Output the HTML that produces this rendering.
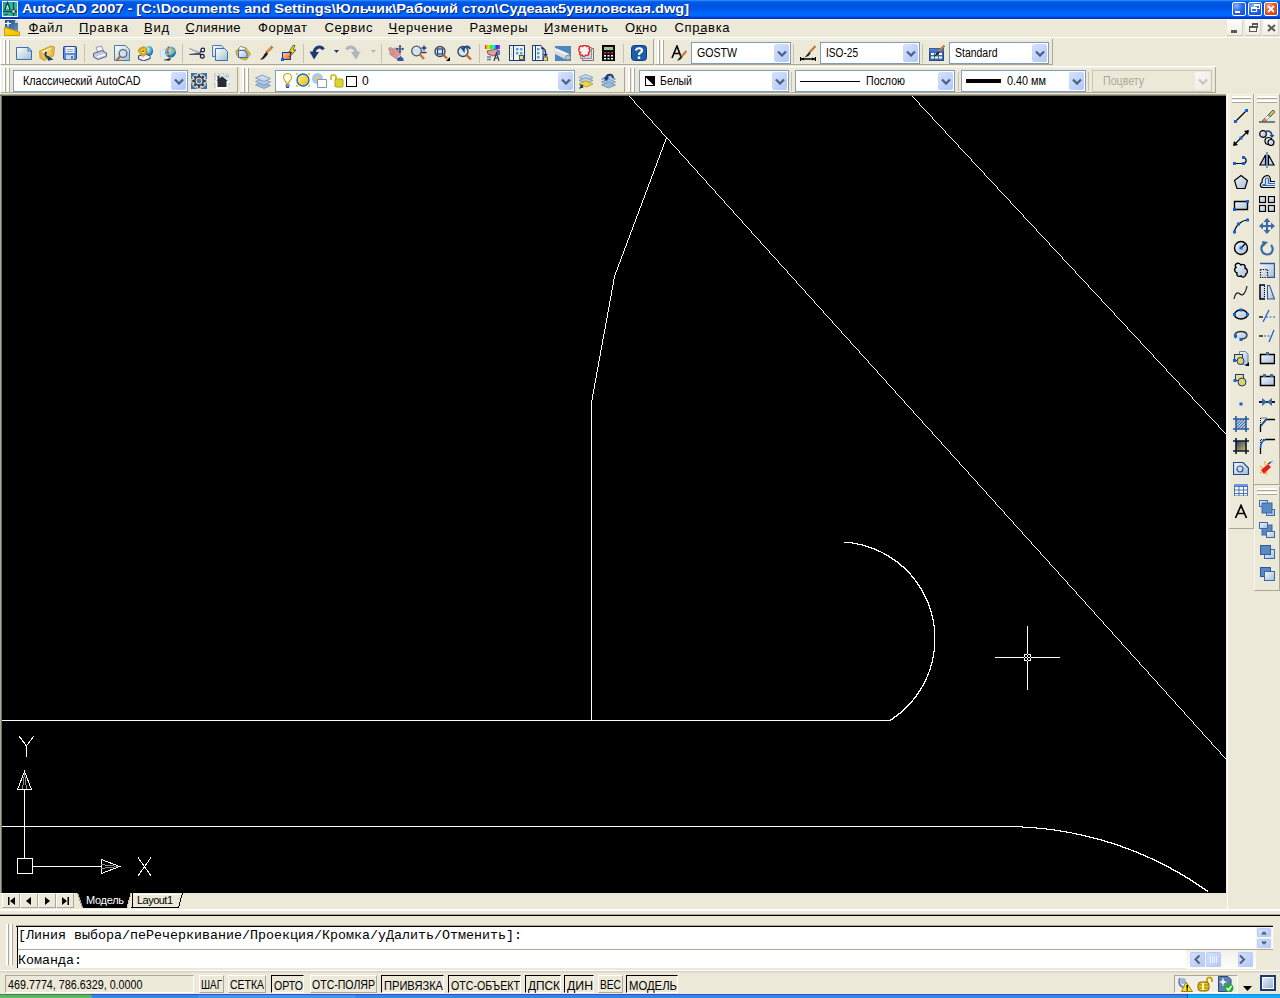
<!DOCTYPE html>
<html><head><meta charset="utf-8"><style>
html,body{margin:0;padding:0}
body{width:1280px;height:998px;overflow:hidden;position:relative;background:#ECE9D8;font-family:"Liberation Sans",sans-serif}
.a{position:absolute}
.t{position:absolute;white-space:pre}
</style></head><body>
<div class="a" style="left:0px;top:0px;width:1280px;height:19px;background:linear-gradient(180deg,#4A9AF8 0px,#0A72F8 1px,#005CE8 2px,#0054E3 4px,#0054E3 8px,#005AF0 10px,#0066FC 12px,#0068FF 16px,#0048E0 17px,#0030D0 18px,#0030D0 19px)"></div>
<svg class="a" style="left:2px;top:1px" width="16" height="16" viewBox="0 0 16 16"><defs><linearGradient id="gTeal" x1="0" y1="0" x2="1" y2="1"><stop offset="0" stop-color="#1E9C88"/><stop offset="0.5" stop-color="#3CB8A4"/><stop offset="1" stop-color="#24A08C"/></linearGradient></defs><rect x="0.5" y="0.5" width="15" height="15" fill="url(#gTeal)" stroke="#FFFFFF"/><path d="M3 9L5.5 2.5L8 9" stroke="#0C4C40" stroke-width="2" fill="none"/><path d="M4.5 8L5.5 4.5L6.5 8" stroke="#E0F8F0" stroke-width="1" fill="none"/><path d="M11.5 1V15M1 10.5H15" stroke="#0C4C40" stroke-width="1.3"/><rect x="10" y="9" width="3" height="3" fill="#FFFFFF" stroke="#0C4C40" stroke-width="0.8"/><path d="M2 14L6 13" stroke="#0C4C40" stroke-width="1"/></svg>
<div class="t" style="left:22px;top:2px;font-size:13px;line-height:13px;color:#fff;font-weight:bold;transform:scaleX(1.1226);transform-origin:0 0;text-shadow:1px 1px 0 #0A246A;">AutoCAD 2007 - [C:\Documents and Settings\Юльчик\Рабочий стол\Судеаак5увиловская.dwg]</div>
<div class="a" style="left:1232px;top:2px;width:12px;height:12px;border:1px solid #fff;border-radius:2px;background:radial-gradient(circle at 30% 25%,#8CB4FF 0,#2A68F0 45%,#0C4AD8 100%)"></div><div class="a" style="left:1235px;top:11px;width:5px;height:2px;background:#fff"></div>
<div class="a" style="left:1248px;top:2px;width:12px;height:12px;border:1px solid #fff;border-radius:2px;background:radial-gradient(circle at 30% 25%,#8CB4FF 0,#2A68F0 45%,#0C4AD8 100%)"></div><div class="a" style="left:1254px;top:4px;width:5px;height:4px;border:1px solid #fff;border-top-width:2px;box-sizing:border-box;width:6px;height:5px"></div><div class="a" style="left:1251px;top:7px;width:6px;height:5px;border:1px solid #fff;border-top-width:2px;box-sizing:border-box;background:#2A68F0"></div>
<div class="a" style="left:1264px;top:2px;width:12px;height:12px;border:1px solid #fff;border-radius:2px;background:radial-gradient(circle at 30% 25%,#F0A080 0,#E05A30 45%,#C83C10 100%)"></div><svg class="a" style="left:1267px;top:5px" width="8" height="8"><path d="M1 1L7 7M7 1L1 7" stroke="#fff" stroke-width="1.8"/></svg>
<div class="a" style="left:0px;top:19px;width:1280px;height:1px;background:#FBF6E4"></div>
<div class="a" style="left:0px;top:37px;width:1280px;height:1px;background:#FFFFFF"></div>
<svg class="a" style="left:4px;top:20px" width="16" height="16" viewBox="0 0 16 16"><defs><linearGradient id="gMB" x1="0" y1="0" x2="1" y2="1"><stop offset="0" stop-color="#1C4A88"/><stop offset="1" stop-color="#6A94C0"/></linearGradient><linearGradient id="gMY" x1="0" y1="0" x2="1" y2="1"><stop offset="0" stop-color="#F8D820"/><stop offset="1" stop-color="#F0C000"/></linearGradient></defs><path d="M1 0H11L14 3V12L1 7Z" fill="url(#gMB)"/><path d="M11 0V3H14Z" fill="#C0D4E8"/><path d="M4 1V7M1 3.5H7" stroke="#FFFFFF" stroke-width="1"/><circle cx="4" cy="3.5" r="1.2" fill="#FFFFFF"/><path d="M0.5 7.5L15.5 12V15.5H0.5Z" fill="url(#gMY)" stroke="#D09800" stroke-width="1"/></svg>
<div class="t" style="left:28.5px;top:21px;font-size:13px;line-height:13px;color:#000;letter-spacing:0.680px;">Файл</div>
<div class="t" style="left:79px;top:21px;font-size:13px;line-height:13px;color:#000;letter-spacing:1.018px;">Правка</div>
<div class="t" style="left:144px;top:21px;font-size:13px;line-height:13px;color:#000;letter-spacing:0.741px;">Вид</div>
<div class="t" style="left:185.5px;top:21px;font-size:13px;line-height:13px;color:#000;letter-spacing:0.343px;">Слияние</div>
<div class="t" style="left:258px;top:21px;font-size:13px;line-height:13px;color:#000;letter-spacing:0.565px;">Формат</div>
<div class="t" style="left:324.5px;top:21px;font-size:13px;line-height:13px;color:#000;letter-spacing:0.697px;">Сервис</div>
<div class="t" style="left:388.5px;top:21px;font-size:13px;line-height:13px;color:#000;letter-spacing:0.785px;">Черчение</div>
<div class="t" style="left:469.5px;top:21px;font-size:13px;line-height:13px;color:#000;letter-spacing:0.663px;">Размеры</div>
<div class="t" style="left:544px;top:21px;font-size:13px;line-height:13px;color:#000;letter-spacing:0.766px;">Изменить</div>
<div class="t" style="left:625px;top:21px;font-size:13px;line-height:13px;color:#000;letter-spacing:0.598px;">Окно</div>
<div class="t" style="left:674.5px;top:21px;font-size:13px;line-height:13px;color:#000;letter-spacing:0.667px;">Справка</div>
<div class="a" style="left:28px;top:33px;width:11px;height:1px;background:#000"></div>
<div class="a" style="left:79px;top:33px;width:10px;height:1px;background:#000"></div>
<div class="a" style="left:144px;top:33px;width:8px;height:1px;background:#000"></div>
<div class="a" style="left:185px;top:33px;width:9px;height:1px;background:#000"></div>
<div class="a" style="left:284px;top:33px;width:9px;height:1px;background:#000"></div>
<div class="a" style="left:341px;top:33px;width:7px;height:1px;background:#000"></div>
<div class="a" style="left:388px;top:33px;width:10px;height:1px;background:#000"></div>
<div class="a" style="left:484px;top:33px;width:7px;height:1px;background:#000"></div>
<div class="a" style="left:544px;top:33px;width:9px;height:1px;background:#000"></div>
<div class="a" style="left:635px;top:33px;width:8px;height:1px;background:#000"></div>
<div class="a" style="left:698px;top:33px;width:8px;height:1px;background:#000"></div>
<div class="a" style="left:1227px;top:20px;width:16px;height:16px;background:linear-gradient(180deg,#FDFDFB,#EEEDE5);border-right:1px solid #D8D4C4;border-bottom:1px solid #CFCBBA;box-sizing:border-box"></div><div class="a" style="left:1231px;top:30px;width:6px;height:3px;background:#5A594F"></div>
<div class="a" style="left:1245px;top:20px;width:16px;height:16px;background:linear-gradient(180deg,#FDFDFB,#EEEDE5);border-right:1px solid #D8D4C4;border-bottom:1px solid #CFCBBA;box-sizing:border-box"></div><div class="a" style="left:1252px;top:23px;width:6px;height:5px;border:1px solid #5A594F;border-top-width:2px;box-sizing:border-box"></div><div class="a" style="left:1249px;top:26px;width:8px;height:6px;border:1px solid #5A594F;border-top-width:2px;box-sizing:border-box;background:#F6F5F0"></div>
<div class="a" style="left:1263px;top:20px;width:16px;height:16px;background:linear-gradient(180deg,#FDFDFB,#EEEDE5);border-right:1px solid #D8D4C4;border-bottom:1px solid #CFCBBA;box-sizing:border-box"></div><svg class="a" style="left:1267px;top:24px" width="9" height="8"><path d="M1 1L8 7M8 1L1 7" stroke="#5A594F" stroke-width="2"/></svg>
<div class="a" style="left:0px;top:94px;width:1228px;height:800px;background:#ECE9D8"></div>
<div class="a" style="left:0px;top:94px;width:1226px;height:1px;background:#ACA899"></div>
<div class="a" style="left:0px;top:95px;width:1226px;height:1px;background:#716F64"></div>
<div class="a" style="left:0px;top:96px;width:1px;height:797px;background:#ACA899"></div>
<div class="a" style="left:1px;top:96px;width:1px;height:797px;background:#716F64"></div>
<div class="a" style="left:1226px;top:94px;width:1px;height:800px;background:#F1EFE2"></div>
<div class="a" style="left:1227px;top:94px;width:1px;height:815px;background:#FFFFFF"></div>
<div class="a" style="left:2px;top:96px;width:1224px;height:797px;background:#000"></div>
<svg class="a" style="left:0;top:0" width="1280" height="998" shape-rendering="crispEdges">
<path d="M2 720h1v1h-1zm0 106h1v1h-1zm1 -106h1v1h-1zm0 106h1v1h-1zm1 -106h1v1h-1zm0 106h1v1h-1zm1 -106h1v1h-1zm0 106h1v1h-1zm1 -106h1v1h-1zm0 106h1v1h-1zm1 -106h1v1h-1zm0 106h1v1h-1zm1 -106h1v1h-1zm0 106h1v1h-1zm1 -106h1v1h-1zm0 106h1v1h-1zm1 -106h1v1h-1zm0 106h1v1h-1zm1 -106h1v1h-1zm0 106h1v1h-1zm1 -106h1v1h-1zm0 106h1v1h-1zm1 -106h1v1h-1zm0 106h1v1h-1zm1 -106h1v1h-1zm0 106h1v1h-1zm1 -106h1v1h-1zm0 106h1v1h-1zm1 -106h1v1h-1zm0 106h1v1h-1zm1 -106h1v1h-1zm0 106h1v1h-1zm1 -106h1v1h-1zm0 106h1v1h-1zm1 -106h1v1h-1zm0 106h1v1h-1zm1 -106h1v1h-1zm0 106h1v1h-1zm1 -106h1v1h-1zm0 106h1v1h-1zm1 -106h1v1h-1zm0 106h1v1h-1zm1 -106h1v1h-1zm0 106h1v1h-1zm1 -106h1v1h-1zm0 106h1v1h-1zm1 -106h1v1h-1zm0 106h1v1h-1zm1 -106h1v1h-1zm0 106h1v1h-1zm1 -106h1v1h-1zm0 106h1v1h-1zm1 -106h1v1h-1zm0 106h1v1h-1zm1 -106h1v1h-1zm0 106h1v1h-1zm1 -106h1v1h-1zm0 106h1v1h-1zm1 -106h1v1h-1zm0 106h1v1h-1zm1 -106h1v1h-1zm0 106h1v1h-1zm1 -106h1v1h-1zm0 106h1v1h-1zm1 -106h1v1h-1zm0 106h1v1h-1zm1 -106h1v1h-1zm0 106h1v1h-1zm1 -106h1v1h-1zm0 106h1v1h-1zm1 -106h1v1h-1zm0 106h1v1h-1zm1 -106h1v1h-1zm0 106h1v1h-1zm1 -106h1v1h-1zm0 106h1v1h-1zm1 -106h1v1h-1zm0 106h1v1h-1zm1 -106h1v1h-1zm0 106h1v1h-1zm1 -106h1v1h-1zm0 106h1v1h-1zm1 -106h1v1h-1zm0 106h1v1h-1zm1 -106h1v1h-1zm0 106h1v1h-1zm1 -106h1v1h-1zm0 106h1v1h-1zm1 -106h1v1h-1zm0 106h1v1h-1zm1 -106h1v1h-1zm0 106h1v1h-1zm1 -106h1v1h-1zm0 106h1v1h-1zm1 -106h1v1h-1zm0 106h1v1h-1zm1 -106h1v1h-1zm0 106h1v1h-1zm1 -106h1v1h-1zm0 106h1v1h-1zm1 -106h1v1h-1zm0 106h1v1h-1zm1 -106h1v1h-1zm0 106h1v1h-1zm1 -106h1v1h-1zm0 106h1v1h-1zm1 -106h1v1h-1zm0 106h1v1h-1zm1 -106h1v1h-1zm0 106h1v1h-1zm1 -106h1v1h-1zm0 106h1v1h-1zm1 -106h1v1h-1zm0 106h1v1h-1zm1 -106h1v1h-1zm0 106h1v1h-1zm1 -106h1v1h-1zm0 106h1v1h-1zm1 -106h1v1h-1zm0 106h1v1h-1zm1 -106h1v1h-1zm0 106h1v1h-1zm1 -106h1v1h-1zm0 106h1v1h-1zm1 -106h1v1h-1zm0 106h1v1h-1zm1 -106h1v1h-1zm0 106h1v1h-1zm1 -106h1v1h-1zm0 106h1v1h-1zm1 -106h1v1h-1zm0 106h1v1h-1zm1 -106h1v1h-1zm0 106h1v1h-1zm1 -106h1v1h-1zm0 106h1v1h-1zm1 -106h1v1h-1zm0 106h1v1h-1zm1 -106h1v1h-1zm0 106h1v1h-1zm1 -106h1v1h-1zm0 106h1v1h-1zm1 -106h1v1h-1zm0 106h1v1h-1zm1 -106h1v1h-1zm0 106h1v1h-1zm1 -106h1v1h-1zm0 106h1v1h-1zm1 -106h1v1h-1zm0 106h1v1h-1zm1 -106h1v1h-1zm0 106h1v1h-1zm1 -106h1v1h-1zm0 106h1v1h-1zm1 -106h1v1h-1zm0 106h1v1h-1zm1 -106h1v1h-1zm0 106h1v1h-1zm1 -106h1v1h-1zm0 106h1v1h-1zm1 -106h1v1h-1zm0 106h1v1h-1zm1 -106h1v1h-1zm0 106h1v1h-1zm1 -106h1v1h-1zm0 106h1v1h-1zm1 -106h1v1h-1zm0 106h1v1h-1zm1 -106h1v1h-1zm0 106h1v1h-1zm1 -106h1v1h-1zm0 106h1v1h-1zm1 -106h1v1h-1zm0 106h1v1h-1zm1 -106h1v1h-1zm0 106h1v1h-1zm1 -106h1v1h-1zm0 106h1v1h-1zm1 -106h1v1h-1zm0 106h1v1h-1zm1 -106h1v1h-1zm0 106h1v1h-1zm1 -106h1v1h-1zm0 106h1v1h-1zm1 -106h1v1h-1zm0 106h1v1h-1zm1 -106h1v1h-1zm0 106h1v1h-1zm1 -106h1v1h-1zm0 106h1v1h-1zm1 -106h1v1h-1zm0 106h1v1h-1zm1 -106h1v1h-1zm0 106h1v1h-1zm1 -106h1v1h-1zm0 106h1v1h-1zm1 -106h1v1h-1zm0 106h1v1h-1zm1 -106h1v1h-1zm0 106h1v1h-1zm1 -106h1v1h-1zm0 106h1v1h-1zm1 -106h1v1h-1zm0 106h1v1h-1zm1 -106h1v1h-1zm0 106h1v1h-1zm1 -106h1v1h-1zm0 106h1v1h-1zm1 -106h1v1h-1zm0 106h1v1h-1zm1 -106h1v1h-1zm0 106h1v1h-1zm1 -106h1v1h-1zm0 106h1v1h-1zm1 -106h1v1h-1zm0 106h1v1h-1zm1 -106h1v1h-1zm0 106h1v1h-1zm1 -106h1v1h-1zm0 106h1v1h-1zm1 -106h1v1h-1zm0 106h1v1h-1zm1 -106h1v1h-1zm0 106h1v1h-1zm1 -106h1v1h-1zm0 106h1v1h-1zm1 -106h1v1h-1zm0 106h1v1h-1zm1 -106h1v1h-1zm0 106h1v1h-1zm1 -106h1v1h-1zm0 106h1v1h-1zm1 -106h1v1h-1zm0 106h1v1h-1zm1 -106h1v1h-1zm0 106h1v1h-1zm1 -106h1v1h-1zm0 106h1v1h-1zm1 -106h1v1h-1zm0 106h1v1h-1zm1 -106h1v1h-1zm0 106h1v1h-1zm1 -106h1v1h-1zm0 106h1v1h-1zm1 -106h1v1h-1zm0 106h1v1h-1zm1 -106h1v1h-1zm0 106h1v1h-1zm1 -106h1v1h-1zm0 106h1v1h-1zm1 -106h1v1h-1zm0 106h1v1h-1zm1 -106h1v1h-1zm0 106h1v1h-1zm1 -106h1v1h-1zm0 106h1v1h-1zm1 -106h1v1h-1zm0 106h1v1h-1zm1 -106h1v1h-1zm0 106h1v1h-1zm1 -106h1v1h-1zm0 106h1v1h-1zm1 -106h1v1h-1zm0 106h1v1h-1zm1 -106h1v1h-1zm0 106h1v1h-1zm1 -106h1v1h-1zm0 106h1v1h-1zm1 -106h1v1h-1zm0 106h1v1h-1zm1 -106h1v1h-1zm0 106h1v1h-1zm1 -106h1v1h-1zm0 106h1v1h-1zm1 -106h1v1h-1zm0 106h1v1h-1zm1 -106h1v1h-1zm0 106h1v1h-1zm1 -106h1v1h-1zm0 106h1v1h-1zm1 -106h1v1h-1zm0 106h1v1h-1zm1 -106h1v1h-1zm0 106h1v1h-1zm1 -106h1v1h-1zm0 106h1v1h-1zm1 -106h1v1h-1zm0 106h1v1h-1zm1 -106h1v1h-1zm0 106h1v1h-1zm1 -106h1v1h-1zm0 106h1v1h-1zm1 -106h1v1h-1zm0 106h1v1h-1zm1 -106h1v1h-1zm0 106h1v1h-1zm1 -106h1v1h-1zm0 106h1v1h-1zm1 -106h1v1h-1zm0 106h1v1h-1zm1 -106h1v1h-1zm0 106h1v1h-1zm1 -106h1v1h-1zm0 106h1v1h-1zm1 -106h1v1h-1zm0 106h1v1h-1zm1 -106h1v1h-1zm0 106h1v1h-1zm1 -106h1v1h-1zm0 106h1v1h-1zm1 -106h1v1h-1zm0 106h1v1h-1zm1 -106h1v1h-1zm0 106h1v1h-1zm1 -106h1v1h-1zm0 106h1v1h-1zm1 -106h1v1h-1zm0 106h1v1h-1zm1 -106h1v1h-1zm0 106h1v1h-1zm1 -106h1v1h-1zm0 106h1v1h-1zm1 -106h1v1h-1zm0 106h1v1h-1zm1 -106h1v1h-1zm0 106h1v1h-1zm1 -106h1v1h-1zm0 106h1v1h-1zm1 -106h1v1h-1zm0 106h1v1h-1zm1 -106h1v1h-1zm0 106h1v1h-1zm1 -106h1v1h-1zm0 106h1v1h-1zm1 -106h1v1h-1zm0 106h1v1h-1zm1 -106h1v1h-1zm0 106h1v1h-1zm1 -106h1v1h-1zm0 106h1v1h-1zm1 -106h1v1h-1zm0 106h1v1h-1zm1 -106h1v1h-1zm0 106h1v1h-1zm1 -106h1v1h-1zm0 106h1v1h-1zm1 -106h1v1h-1zm0 106h1v1h-1zm1 -106h1v1h-1zm0 106h1v1h-1zm1 -106h1v1h-1zm0 106h1v1h-1zm1 -106h1v1h-1zm0 106h1v1h-1zm1 -106h1v1h-1zm0 106h1v1h-1zm1 -106h1v1h-1zm0 106h1v1h-1zm1 -106h1v1h-1zm0 106h1v1h-1zm1 -106h1v1h-1zm0 106h1v1h-1zm1 -106h1v1h-1zm0 106h1v1h-1zm1 -106h1v1h-1zm0 106h1v1h-1zm1 -106h1v1h-1zm0 106h1v1h-1zm1 -106h1v1h-1zm0 106h1v1h-1zm1 -106h1v1h-1zm0 106h1v1h-1zm1 -106h1v1h-1zm0 106h1v1h-1zm1 -106h1v1h-1zm0 106h1v1h-1zm1 -106h1v1h-1zm0 106h1v1h-1zm1 -106h1v1h-1zm0 106h1v1h-1zm1 -106h1v1h-1zm0 106h1v1h-1zm1 -106h1v1h-1zm0 106h1v1h-1zm1 -106h1v1h-1zm0 106h1v1h-1zm1 -106h1v1h-1zm0 106h1v1h-1zm1 -106h1v1h-1zm0 106h1v1h-1zm1 -106h1v1h-1zm0 106h1v1h-1zm1 -106h1v1h-1zm0 106h1v1h-1zm1 -106h1v1h-1zm0 106h1v1h-1zm1 -106h1v1h-1zm0 106h1v1h-1zm1 -106h1v1h-1zm0 106h1v1h-1zm1 -106h1v1h-1zm0 106h1v1h-1zm1 -106h1v1h-1zm0 106h1v1h-1zm1 -106h1v1h-1zm0 106h1v1h-1zm1 -106h1v1h-1zm0 106h1v1h-1zm1 -106h1v1h-1zm0 106h1v1h-1zm1 -106h1v1h-1zm0 106h1v1h-1zm1 -106h1v1h-1zm0 106h1v1h-1zm1 -106h1v1h-1zm0 106h1v1h-1zm1 -106h1v1h-1zm0 106h1v1h-1zm1 -106h1v1h-1zm0 106h1v1h-1zm1 -106h1v1h-1zm0 106h1v1h-1zm1 -106h1v1h-1zm0 106h1v1h-1zm1 -106h1v1h-1zm0 106h1v1h-1zm1 -106h1v1h-1zm0 106h1v1h-1zm1 -106h1v1h-1zm0 106h1v1h-1zm1 -106h1v1h-1zm0 106h1v1h-1zm1 -106h1v1h-1zm0 106h1v1h-1zm1 -106h1v1h-1zm0 106h1v1h-1zm1 -106h1v1h-1zm0 106h1v1h-1zm1 -106h1v1h-1zm0 106h1v1h-1zm1 -106h1v1h-1zm0 106h1v1h-1zm1 -106h1v1h-1zm0 106h1v1h-1zm1 -106h1v1h-1zm0 106h1v1h-1zm1 -106h1v1h-1zm0 106h1v1h-1zm1 -106h1v1h-1zm0 106h1v1h-1zm1 -106h1v1h-1zm0 106h1v1h-1zm1 -106h1v1h-1zm0 106h1v1h-1zm1 -106h1v1h-1zm0 106h1v1h-1zm1 -106h1v1h-1zm0 106h1v1h-1zm1 -106h1v1h-1zm0 106h1v1h-1zm1 -106h1v1h-1zm0 106h1v1h-1zm1 -106h1v1h-1zm0 106h1v1h-1zm1 -106h1v1h-1zm0 106h1v1h-1zm1 -106h1v1h-1zm0 106h1v1h-1zm1 -106h1v1h-1zm0 106h1v1h-1zm1 -106h1v1h-1zm0 106h1v1h-1zm1 -106h1v1h-1zm0 106h1v1h-1zm1 -106h1v1h-1zm0 106h1v1h-1zm1 -106h1v1h-1zm0 106h1v1h-1zm1 -106h1v1h-1zm0 106h1v1h-1zm1 -106h1v1h-1zm0 106h1v1h-1zm1 -106h1v1h-1zm0 106h1v1h-1zm1 -106h1v1h-1zm0 106h1v1h-1zm1 -106h1v1h-1zm0 106h1v1h-1zm1 -106h1v1h-1zm0 106h1v1h-1zm1 -106h1v1h-1zm0 106h1v1h-1zm1 -106h1v1h-1zm0 106h1v1h-1zm1 -106h1v1h-1zm0 106h1v1h-1zm1 -106h1v1h-1zm0 106h1v1h-1zm1 -106h1v1h-1zm0 106h1v1h-1zm1 -106h1v1h-1zm0 106h1v1h-1zm1 -106h1v1h-1zm0 106h1v1h-1zm1 -106h1v1h-1zm0 106h1v1h-1zm1 -106h1v1h-1zm0 106h1v1h-1zm1 -106h1v1h-1zm0 106h1v1h-1zm1 -106h1v1h-1zm0 106h1v1h-1zm1 -106h1v1h-1zm0 106h1v1h-1zm1 -106h1v1h-1zm0 106h1v1h-1zm1 -106h1v1h-1zm0 106h1v1h-1zm1 -106h1v1h-1zm0 106h1v1h-1zm1 -106h1v1h-1zm0 106h1v1h-1zm1 -106h1v1h-1zm0 106h1v1h-1zm1 -106h1v1h-1zm0 106h1v1h-1zm1 -106h1v1h-1zm0 106h1v1h-1zm1 -106h1v1h-1zm0 106h1v1h-1zm1 -106h1v1h-1zm0 106h1v1h-1zm1 -106h1v1h-1zm0 106h1v1h-1zm1 -106h1v1h-1zm0 106h1v1h-1zm1 -106h1v1h-1zm0 106h1v1h-1zm1 -106h1v1h-1zm0 106h1v1h-1zm1 -106h1v1h-1zm0 106h1v1h-1zm1 -106h1v1h-1zm0 106h1v1h-1zm1 -106h1v1h-1zm0 106h1v1h-1zm1 -106h1v1h-1zm0 106h1v1h-1zm1 -106h1v1h-1zm0 106h1v1h-1zm1 -106h1v1h-1zm0 106h1v1h-1zm1 -106h1v1h-1zm0 106h1v1h-1zm1 -106h1v1h-1zm0 106h1v1h-1zm1 -106h1v1h-1zm0 106h1v1h-1zm1 -106h1v1h-1zm0 106h1v1h-1zm1 -106h1v1h-1zm0 106h1v1h-1zm1 -106h1v1h-1zm0 106h1v1h-1zm1 -106h1v1h-1zm0 106h1v1h-1zm1 -106h1v1h-1zm0 106h1v1h-1zm1 -106h1v1h-1zm0 106h1v1h-1zm1 -106h1v1h-1zm0 106h1v1h-1zm1 -106h1v1h-1zm0 106h1v1h-1zm1 -106h1v1h-1zm0 106h1v1h-1zm1 -106h1v1h-1zm0 106h1v1h-1zm1 -106h1v1h-1zm0 106h1v1h-1zm1 -106h1v1h-1zm0 106h1v1h-1zm1 -106h1v1h-1zm0 106h1v1h-1zm1 -106h1v1h-1zm0 106h1v1h-1zm1 -106h1v1h-1zm0 106h1v1h-1zm1 -106h1v1h-1zm0 106h1v1h-1zm1 -106h1v1h-1zm0 106h1v1h-1zm1 -106h1v1h-1zm0 106h1v1h-1zm1 -106h1v1h-1zm0 106h1v1h-1zm1 -106h1v1h-1zm0 106h1v1h-1zm1 -106h1v1h-1zm0 106h1v1h-1zm1 -106h1v1h-1zm0 106h1v1h-1zm1 -106h1v1h-1zm0 106h1v1h-1zm1 -106h1v1h-1zm0 106h1v1h-1zm1 -106h1v1h-1zm0 106h1v1h-1zm1 -106h1v1h-1zm0 106h1v1h-1zm1 -106h1v1h-1zm0 106h1v1h-1zm1 -106h1v1h-1zm0 106h1v1h-1zm1 -106h1v1h-1zm0 106h1v1h-1zm1 -106h1v1h-1zm0 106h1v1h-1zm1 -106h1v1h-1zm0 106h1v1h-1zm1 -106h1v1h-1zm0 106h1v1h-1zm1 -106h1v1h-1zm0 106h1v1h-1zm1 -106h1v1h-1zm0 106h1v1h-1zm1 -106h1v1h-1zm0 106h1v1h-1zm1 -106h1v1h-1zm0 106h1v1h-1zm1 -106h1v1h-1zm0 106h1v1h-1zm1 -106h1v1h-1zm0 106h1v1h-1zm1 -106h1v1h-1zm0 106h1v1h-1zm1 -106h1v1h-1zm0 106h1v1h-1zm1 -106h1v1h-1zm0 106h1v1h-1zm1 -106h1v1h-1zm0 106h1v1h-1zm1 -106h1v1h-1zm0 106h1v1h-1zm1 -106h1v1h-1zm0 106h1v1h-1zm1 -106h1v1h-1zm0 106h1v1h-1zm1 -106h1v1h-1zm0 106h1v1h-1zm1 -106h1v1h-1zm0 106h1v1h-1zm1 -106h1v1h-1zm0 106h1v1h-1zm1 -106h1v1h-1zm0 106h1v1h-1zm1 -106h1v1h-1zm0 106h1v1h-1zm1 -106h1v1h-1zm0 106h1v1h-1zm1 -106h1v1h-1zm0 106h1v1h-1zm1 -106h1v1h-1zm0 106h1v1h-1zm1 -106h1v1h-1zm0 106h1v1h-1zm1 -106h1v1h-1zm0 106h1v1h-1zm1 -106h1v1h-1zm0 106h1v1h-1zm1 -106h1v1h-1zm0 106h1v1h-1zm1 -106h1v1h-1zm0 106h1v1h-1zm1 -106h1v1h-1zm0 106h1v1h-1zm1 -106h1v1h-1zm0 106h1v1h-1zm1 -106h1v1h-1zm0 106h1v1h-1zm1 -106h1v1h-1zm0 106h1v1h-1zm1 -106h1v1h-1zm0 106h1v1h-1zm1 -106h1v1h-1zm0 106h1v1h-1zm1 -106h1v1h-1zm0 106h1v1h-1zm1 -106h1v1h-1zm0 106h1v1h-1zm1 -106h1v1h-1zm0 106h1v1h-1zm1 -106h1v1h-1zm0 106h1v1h-1zm1 -106h1v1h-1zm0 106h1v1h-1zm1 -106h1v1h-1zm0 106h1v1h-1zm1 -106h1v1h-1zm0 106h1v1h-1zm1 -106h1v1h-1zm0 106h1v1h-1zm1 -106h1v1h-1zm0 106h1v1h-1zm1 -106h1v1h-1zm0 106h1v1h-1zm1 -106h1v1h-1zm0 106h1v1h-1zm1 -106h1v1h-1zm0 106h1v1h-1zm1 -106h1v1h-1zm0 106h1v1h-1zm1 -106h1v1h-1zm0 106h1v1h-1zm1 -106h1v1h-1zm0 106h1v1h-1zm1 -106h1v1h-1zm0 106h1v1h-1zm1 -106h1v1h-1zm0 106h1v1h-1zm1 -106h1v1h-1zm0 106h1v1h-1zm1 -106h1v1h-1zm0 106h1v1h-1zm1 -106h1v1h-1zm0 106h1v1h-1zm1 -106h1v1h-1zm0 106h1v1h-1zm1 -106h1v1h-1zm0 106h1v1h-1zm1 -106h1v1h-1zm0 106h1v1h-1zm1 -106h1v1h-1zm0 106h1v1h-1zm1 -106h1v1h-1zm0 106h1v1h-1zm1 -106h1v1h-1zm0 106h1v1h-1zm1 -106h1v1h-1zm0 106h1v1h-1zm1 -106h1v1h-1zm0 106h1v1h-1zm1 -106h1v1h-1zm0 106h1v1h-1zm1 -106h1v1h-1zm0 106h1v1h-1zm1 -106h1v1h-1zm0 106h1v1h-1zm1 -106h1v1h-1zm0 106h1v1h-1zm1 -106h1v1h-1zm0 106h1v1h-1zm1 -106h1v1h-1zm0 106h1v1h-1zm1 -106h1v1h-1zm0 106h1v1h-1zm1 -106h1v1h-1zm0 106h1v1h-1zm1 -106h1v1h-1zm0 106h1v1h-1zm1 -106h1v1h-1zm0 106h1v1h-1zm1 -106h1v1h-1zm0 106h1v1h-1zm1 -106h1v1h-1zm0 106h1v1h-1zm1 -106h1v1h-1zm0 106h1v1h-1zm1 -106h1v1h-1zm0 106h1v1h-1zm1 -106h1v1h-1zm0 106h1v1h-1zm1 -106h1v1h-1zm0 106h1v1h-1zm1 -106h1v1h-1zm0 106h1v1h-1zm1 -106h1v1h-1zm0 106h1v1h-1zm1 -106h1v1h-1zm0 106h1v1h-1zm1 -106h1v1h-1zm0 106h1v1h-1zm1 -106h1v1h-1zm0 106h1v1h-1zm1 -106h1v1h-1zm0 106h1v1h-1zm1 -106h1v1h-1zm0 106h1v1h-1zm1 -106h1v1h-1zm0 106h1v1h-1zm1 -106h1v1h-1zm0 106h1v1h-1zm1 -106h1v1h-1zm0 106h1v1h-1zm1 -106h1v1h-1zm0 106h1v1h-1zm1 -106h1v1h-1zm0 106h1v1h-1zm1 -106h1v1h-1zm0 106h1v1h-1zm1 -106h1v1h-1zm0 106h1v1h-1zm1 -106h1v1h-1zm0 106h1v1h-1zm1 -106h1v1h-1zm0 106h1v1h-1zm1 -106h1v1h-1zm0 106h1v1h-1zm1 -106h1v1h-1zm0 106h1v1h-1zm1 -106h1v1h-1zm0 106h1v1h-1zm1 -106h1v1h-1zm0 106h1v1h-1zm1 -106h1v1h-1zm0 106h1v1h-1zm1 -106h1v1h-1zm0 106h1v1h-1zm1 -106h1v1h-1zm0 106h1v1h-1zm1 -106h1v1h-1zm0 106h1v1h-1zm1 -106h1v1h-1zm0 106h1v1h-1zm1 -106h1v1h-1zm0 106h1v1h-1zm1 -106h1v1h-1zm0 106h1v1h-1zm1 -106h1v1h-1zm0 106h1v1h-1zm1 -106h1v1h-1zm0 106h1v1h-1zm1 -106h1v1h-1zm0 106h1v1h-1zm1 -106h1v1h-1zm0 106h1v1h-1zm1 -106h1v1h-1zm0 106h1v1h-1zm1 -106h1v1h-1zm0 106h1v1h-1zm1 -106h1v1h-1zm0 106h1v1h-1zm1 -106h1v1h-1zm0 106h1v1h-1zm1 -106h1v1h-1zm0 106h1v1h-1zm1 -106h1v1h-1zm0 106h1v1h-1zm1 -106h1v1h-1zm0 106h1v1h-1zm1 -106h1v1h-1zm0 106h1v1h-1zm1 -106h1v1h-1zm0 106h1v1h-1zm1 -106h1v1h-1zm0 106h1v1h-1zm1 -106h1v1h-1zm0 106h1v1h-1zm1 -106h1v1h-1zm0 106h1v1h-1zm1 -106h1v1h-1zm0 106h1v1h-1zm1 -106h1v1h-1zm0 106h1v1h-1zm1 -106h1v1h-1zm0 106h1v1h-1zm1 -106h1v1h-1zm0 106h1v1h-1zm1 -106h1v1h-1zm0 106h1v1h-1zm1 -106h1v1h-1zm0 106h1v1h-1zm1 -106h1v1h-1zm0 106h1v1h-1zm1 -106h1v1h-1zm0 106h1v1h-1zm1 -106h1v1h-1zm0 106h1v1h-1zm1 -106h1v1h-1zm0 106h1v1h-1zm1 -106h1v1h-1zm0 106h1v1h-1zm1 -106h1v1h-1zm0 106h1v1h-1zm1 -106h1v1h-1zm0 106h1v1h-1zm1 -106h1v1h-1zm0 106h1v1h-1zm1 -106h1v1h-1zm0 106h1v1h-1zm1 -106h1v1h-1zm0 106h1v1h-1zm1 -106h1v1h-1zm0 106h1v1h-1zm1 -106h1v1h-1zm0 106h1v1h-1zm1 -106h1v1h-1zm0 106h1v1h-1zm1 -106h1v1h-1zm0 106h1v1h-1zm1 -106h1v1h-1zm0 106h1v1h-1zm1 -106h1v1h-1zm0 106h1v1h-1zm1 -106h1v1h-1zm0 106h1v1h-1zm1 -106h1v1h-1zm0 106h1v1h-1zm1 -106h1v1h-1zm0 106h1v1h-1zm1 -106h1v1h-1zm0 106h1v1h-1zm1 -106h1v1h-1zm0 106h1v1h-1zm1 -106h1v1h-1zm0 106h1v1h-1zm1 -106h1v1h-1zm0 106h1v1h-1zm1 -106h1v1h-1zm0 106h1v1h-1zm1 -106h1v1h-1zm0 106h1v1h-1zm1 -106h1v1h-1zm0 106h1v1h-1zm1 -106h1v1h-1zm0 106h1v1h-1zm1 -106h1v1h-1zm0 106h1v1h-1zm1 -106h1v1h-1zm0 106h1v1h-1zm1 -106h1v1h-1zm0 106h1v1h-1zm1 -106h1v1h-1zm0 106h1v1h-1zm1 -106h1v1h-1zm0 106h1v1h-1zm1 -106h1v1h-1zm0 106h1v1h-1zm1 -106h1v1h-1zm0 106h1v1h-1zm1 -106h1v1h-1zm0 106h1v1h-1zm1 -106h1v1h-1zm0 106h1v1h-1zm1 -106h1v1h-1zm0 106h1v1h-1zm1 -106h1v1h-1zm0 106h1v1h-1zm1 -106h1v1h-1zm0 106h1v1h-1zm1 -106h1v1h-1zm0 106h1v1h-1zm1 -106h1v1h-1zm0 106h1v1h-1zm1 -106h1v1h-1zm0 106h1v1h-1zm1 -106h1v1h-1zm0 106h1v1h-1zm1 -106h1v1h-1zm0 106h1v1h-1zm1 -106h1v1h-1zm0 106h1v1h-1zm1 -106h1v1h-1zm0 106h1v1h-1zm1 -106h1v1h-1zm0 106h1v1h-1zm1 -106h1v1h-1zm0 106h1v1h-1zm1 -106h1v1h-1zm0 106h1v1h-1zm1 -106h1v1h-1zm0 106h1v1h-1zm1 -106h1v1h-1zm0 106h1v1h-1zm1 -106h1v1h-1zm0 106h1v1h-1zm1 -106h1v1h-1zm0 106h1v1h-1zm1 -106h1v1h-1zm0 106h1v1h-1zm1 -106h1v1h-1zm0 106h1v1h-1zm1 -106h1v1h-1zm0 106h1v1h-1zm1 -106h1v1h-1zm0 106h1v1h-1zm1 -106h1v1h-1zm0 106h1v1h-1zm1 -106h1v1h-1zm0 106h1v1h-1zm1 -106h1v1h-1zm0 106h1v1h-1zm1 -106h1v1h-1zm0 106h1v1h-1zm1 -106h1v1h-1zm0 106h1v1h-1zm1 -106h1v1h-1zm0 106h1v1h-1zm1 -106h1v1h-1zm0 106h1v1h-1zm1 -106h1v1h-1zm0 106h1v1h-1zm1 -106h1v1h-1zm0 106h1v1h-1zm1 -106h1v1h-1zm0 106h1v1h-1zm1 -106h1v1h-1zm0 106h1v1h-1zm1 -106h1v1h-1zm0 106h1v1h-1zm1 -106h1v1h-1zm0 106h1v1h-1zm1 -106h1v1h-1zm0 106h1v1h-1zm1 -106h1v1h-1zm0 106h1v1h-1zm1 -106h1v1h-1zm0 106h1v1h-1zm1 -106h1v1h-1zm0 106h1v1h-1zm1 -106h1v1h-1zm0 106h1v1h-1zm1 -106h1v1h-1zm0 106h1v1h-1zm1 -106h1v1h-1zm0 106h1v1h-1zm1 -106h1v1h-1zm0 106h1v1h-1zm1 -106h1v1h-1zm0 106h1v1h-1zm1 -106h1v1h-1zm0 106h1v1h-1zm1 -106h1v1h-1zm0 106h1v1h-1zm1 -106h1v1h-1zm0 106h1v1h-1zm1 -106h1v1h-1zm0 106h1v1h-1zm1 -106h1v1h-1zm0 106h1v1h-1zm1 -106h1v1h-1zm0 106h1v1h-1zm1 -106h1v1h-1zm0 106h1v1h-1zm1 -106h1v1h-1zm0 106h1v1h-1zm1 -106h1v1h-1zm0 106h1v1h-1zm1 -106h1v1h-1zm0 106h1v1h-1zm1 -106h1v1h-1zm0 106h1v1h-1zm1 -106h1v1h-1zm0 106h1v1h-1zm1 -106h1v1h-1zm0 106h1v1h-1zm1 -106h1v1h-1zm0 106h1v1h-1zm1 -106h1v1h-1zm0 106h1v1h-1zm1 -106h1v1h-1zm0 106h1v1h-1zm1 -106h1v1h-1zm0 106h1v1h-1zm1 -106h1v1h-1zm0 106h1v1h-1zm1 -106h1v1h-1zm0 106h1v1h-1zm1 -106h1v1h-1zm0 106h1v1h-1zm1 -106h1v1h-1zm0 106h1v1h-1zm1 -106h1v1h-1zm0 106h1v1h-1zm1 -106h1v1h-1zm0 106h1v1h-1zm1 -106h1v1h-1zm0 106h1v1h-1zm1 -106h1v1h-1zm0 106h1v1h-1zm1 -106h1v1h-1zm0 106h1v1h-1zm1 -106h1v1h-1zm0 106h1v1h-1zm1 -106h1v1h-1zm0 106h1v1h-1zm1 -106h1v1h-1zm0 106h1v1h-1zm1 -106h1v1h-1zm0 106h1v1h-1zm1 -106h1v1h-1zm0 106h1v1h-1zm1 -106h1v1h-1zm0 106h1v1h-1zm1 -106h1v1h-1zm0 106h1v1h-1zm1 -106h1v1h-1zm0 106h1v1h-1zm1 -106h1v1h-1zm0 106h1v1h-1zm1 -106h1v1h-1zm0 106h1v1h-1zm1 -106h1v1h-1zm0 106h1v1h-1zm1 -106h1v1h-1zm0 106h1v1h-1zm1 -106h1v1h-1zm0 106h1v1h-1zm1 -106h1v1h-1zm0 106h1v1h-1zm1 -106h1v1h-1zm0 106h1v1h-1zm1 -106h1v1h-1zm0 106h1v1h-1zm1 -106h1v1h-1zm0 106h1v1h-1zm1 -106h1v1h-1zm0 106h1v1h-1zm1 -106h1v1h-1zm0 106h1v1h-1zm1 -106h1v1h-1zm0 106h1v1h-1zm1 -106h1v1h-1zm0 106h1v1h-1zm1 -106h1v1h-1zm0 106h1v1h-1zm1 -106h1v1h-1zm0 106h1v1h-1zm1 -106h1v1h-1zm0 106h1v1h-1zm1 -106h1v1h-1zm0 106h1v1h-1zm1 -106h1v1h-1zm0 106h1v1h-1zm1 -106h1v1h-1zm0 106h1v1h-1zm1 -106h1v1h-1zm0 106h1v1h-1zm1 -106h1v1h-1zm0 106h1v1h-1zm1 -106h1v1h-1zm0 106h1v1h-1zm1 -106h1v1h-1zm0 106h1v1h-1zm1 -106h1v1h-1zm0 106h1v1h-1zm1 -106h1v1h-1zm0 106h1v1h-1zm1 -106h1v1h-1zm0 106h1v1h-1zm1 -106h1v1h-1zm0 106h1v1h-1zm1 -106h1v1h-1zm0 106h1v1h-1zm1 -106h1v1h-1zm0 106h1v1h-1zm1 -106h1v1h-1zm0 106h1v1h-1zm1 -106h1v1h-1zm0 106h1v1h-1zm1 -106h1v1h-1zm0 106h1v1h-1zm1 -106h1v1h-1zm0 106h1v1h-1zm1 -106h1v1h-1zm0 106h1v1h-1zm1 -106h1v1h-1zm0 106h1v1h-1zm1 -106h1v1h-1zm0 106h1v1h-1zm1 -106h1v1h-1zm0 106h1v1h-1zm1 -106h1v1h-1zm0 106h1v1h-1zm1 -106h1v1h-1zm0 106h1v1h-1zm1 -106h1v1h-1zm0 106h1v1h-1zm1 -426h1v321h-1zm0 426h1v1h-1zm1 -432h1v6h-1zm0 326h1v1h-1zm0 106h1v1h-1zm1 -437h1v5h-1zm0 331h1v1h-1zm0 106h1v1h-1zm1 -443h1v6h-1zm0 337h1v1h-1zm0 106h1v1h-1zm1 -448h1v5h-1zm0 342h1v1h-1zm0 106h1v1h-1zm1 -454h1v6h-1zm0 348h1v1h-1zm0 106h1v1h-1zm1 -459h1v5h-1zm0 353h1v1h-1zm0 106h1v1h-1zm1 -465h1v6h-1zm0 359h1v1h-1zm0 106h1v1h-1zm1 -470h1v5h-1zm0 364h1v1h-1zm0 106h1v1h-1zm1 -476h1v6h-1zm0 370h1v1h-1zm0 106h1v1h-1zm1 -481h1v5h-1zm0 375h1v1h-1zm0 106h1v1h-1zm1 -487h1v6h-1zm0 381h1v1h-1zm0 106h1v1h-1zm1 -492h1v5h-1zm0 386h1v1h-1zm0 106h1v1h-1zm1 -497h1v5h-1zm0 391h1v1h-1zm0 106h1v1h-1zm1 -503h1v6h-1zm0 397h1v1h-1zm0 106h1v1h-1zm1 -508h1v5h-1zm0 402h1v1h-1zm0 106h1v1h-1zm1 -514h1v6h-1zm0 408h1v1h-1zm0 106h1v1h-1zm1 -519h1v5h-1zm0 413h1v1h-1zm0 106h1v1h-1zm1 -525h1v6h-1zm0 419h1v1h-1zm0 106h1v1h-1zm1 -530h1v5h-1zm0 424h1v1h-1zm0 106h1v1h-1zm1 -536h1v6h-1zm0 430h1v1h-1zm0 106h1v1h-1zm1 -541h1v5h-1zm0 435h1v1h-1zm0 106h1v1h-1zm1 -547h1v6h-1zm0 441h1v1h-1zm0 106h1v1h-1zm1 -551h1v4h-1zm0 445h1v1h-1zm0 106h1v1h-1zm1 -554h1v3h-1zm0 448h1v1h-1zm0 106h1v1h-1zm1 -556h1v2h-1zm0 450h1v1h-1zm0 106h1v1h-1zm1 -559h1v3h-1zm0 453h1v1h-1zm0 106h1v1h-1zm1 -562h1v3h-1zm0 456h1v1h-1zm0 106h1v1h-1zm1 -564h1v2h-1zm0 458h1v1h-1zm0 106h1v1h-1zm1 -567h1v3h-1zm0 461h1v1h-1zm0 106h1v1h-1zm1 -570h1v3h-1zm0 464h1v1h-1zm0 106h1v1h-1zm1 -572h1v2h-1zm0 466h1v1h-1zm0 106h1v1h-1zm1 -575h1v3h-1zm0 469h1v1h-1zm0 106h1v1h-1zm1 -578h1v3h-1zm0 472h1v1h-1zm0 106h1v1h-1zm1 -580h1v2h-1zm0 474h1v1h-1zm0 106h1v1h-1zm1 -583h1v3h-1zm0 477h1v1h-1zm0 106h1v1h-1zm1 -586h1v3h-1zm0 480h1v1h-1zm0 106h1v1h-1zm1 -588h1v2h-1zm0 482h1v1h-1zm0 106h1v1h-1zm1 -730h1v1h-1zm0 139h1v3h-1zm0 485h1v1h-1zm0 106h1v1h-1zm1 -729h1v1h-1zm0 135h1v3h-1zm0 488h1v1h-1zm0 106h1v1h-1zm1 -728h1v1h-1zm0 132h1v2h-1zm0 490h1v1h-1zm0 106h1v1h-1zm1 -727h1v1h-1zm0 128h1v3h-1zm0 493h1v1h-1zm0 106h1v1h-1zm1 -726h1v1h-1zm0 124h1v3h-1zm0 496h1v1h-1zm0 106h1v1h-1zm1 -725h1v2h-1zm0 121h1v2h-1zm0 498h1v1h-1zm0 106h1v1h-1zm1 -723h1v1h-1zm0 116h1v3h-1zm0 501h1v1h-1zm0 106h1v1h-1zm1 -722h1v1h-1zm0 112h1v3h-1zm0 504h1v1h-1zm0 106h1v1h-1zm1 -721h1v1h-1zm0 109h1v2h-1zm0 506h1v1h-1zm0 106h1v1h-1zm1 -720h1v1h-1zm0 105h1v3h-1zm0 509h1v1h-1zm0 106h1v1h-1zm1 -719h1v1h-1zm0 101h1v3h-1zm0 512h1v1h-1zm0 106h1v1h-1zm1 -718h1v1h-1zm0 98h1v2h-1zm0 514h1v1h-1zm0 106h1v1h-1zm1 -717h1v1h-1zm0 94h1v3h-1zm0 517h1v1h-1zm0 106h1v1h-1zm1 -716h1v1h-1zm0 90h1v3h-1zm0 520h1v1h-1zm0 106h1v1h-1zm1 -715h1v2h-1zm0 87h1v2h-1zm0 522h1v1h-1zm0 106h1v1h-1zm1 -713h1v1h-1zm0 82h1v3h-1zm0 525h1v1h-1zm0 106h1v1h-1zm1 -712h1v1h-1zm0 78h1v3h-1zm0 528h1v1h-1zm0 106h1v1h-1zm1 -711h1v1h-1zm0 75h1v2h-1zm0 530h1v1h-1zm0 106h1v1h-1zm1 -710h1v1h-1zm0 71h1v3h-1zm0 533h1v1h-1zm0 106h1v1h-1zm1 -709h1v1h-1zm0 67h1v3h-1zm0 536h1v1h-1zm0 106h1v1h-1zm1 -708h1v1h-1zm0 64h1v2h-1zm0 538h1v1h-1zm0 106h1v1h-1zm1 -707h1v1h-1zm0 60h1v3h-1zm0 541h1v1h-1zm0 106h1v1h-1zm1 -706h1v1h-1zm0 56h1v3h-1zm0 544h1v1h-1zm0 106h1v1h-1zm1 -705h1v2h-1zm0 53h1v2h-1zm0 546h1v1h-1zm0 106h1v1h-1zm1 -703h1v1h-1zm0 48h1v3h-1zm0 549h1v1h-1zm0 106h1v1h-1zm1 -702h1v1h-1zm0 44h1v3h-1zm0 552h1v1h-1zm0 106h1v1h-1zm1 -701h1v1h-1zm0 41h1v2h-1zm0 554h1v1h-1zm0 106h1v1h-1zm1 -700h1v1h-1zm0 37h1v3h-1zm0 557h1v1h-1zm0 106h1v1h-1zm1 -699h1v1h-1zm0 33h1v3h-1zm0 560h1v1h-1zm0 106h1v1h-1zm1 -698h1v1h-1zm0 30h1v2h-1zm0 562h1v1h-1zm0 106h1v1h-1zm1 -697h1v1h-1zm0 26h1v3h-1zm0 565h1v1h-1zm0 106h1v1h-1zm1 -696h1v1h-1zm0 22h1v3h-1zm0 568h1v1h-1zm0 106h1v1h-1zm1 -695h1v2h-1zm0 19h1v2h-1zm0 570h1v1h-1zm0 106h1v1h-1zm1 -693h1v1h-1zm0 14h1v3h-1zm0 573h1v1h-1zm0 106h1v1h-1zm1 -692h1v1h-1zm0 10h1v3h-1zm0 576h1v1h-1zm0 106h1v1h-1zm1 -691h1v1h-1zm0 7h1v2h-1zm0 578h1v1h-1zm0 106h1v1h-1zm1 -690h1v1h-1zm0 3h1v3h-1zm0 581h1v1h-1zm0 106h1v1h-1zm1 -689h1v2h-1zm0 583h1v1h-1zm0 106h1v1h-1zm1 -688h1v1h-1zm0 582h1v1h-1zm0 106h1v1h-1zm1 -687h1v1h-1zm0 581h1v1h-1zm0 106h1v1h-1zm1 -686h1v1h-1zm0 580h1v1h-1zm0 106h1v1h-1zm1 -685h1v2h-1zm0 579h1v1h-1zm0 106h1v1h-1zm1 -683h1v1h-1zm0 577h1v1h-1zm0 106h1v1h-1zm1 -682h1v1h-1zm0 576h1v1h-1zm0 106h1v1h-1zm1 -681h1v1h-1zm0 575h1v1h-1zm0 106h1v1h-1zm1 -680h1v1h-1zm0 574h1v1h-1zm0 106h1v1h-1zm1 -679h1v1h-1zm0 573h1v1h-1zm0 106h1v1h-1zm1 -678h1v1h-1zm0 572h1v1h-1zm0 106h1v1h-1zm1 -677h1v1h-1zm0 571h1v1h-1zm0 106h1v1h-1zm1 -676h1v1h-1zm0 570h1v1h-1zm0 106h1v1h-1zm1 -675h1v2h-1zm0 569h1v1h-1zm0 106h1v1h-1zm1 -673h1v1h-1zm0 567h1v1h-1zm0 106h1v1h-1zm1 -672h1v1h-1zm0 566h1v1h-1zm0 106h1v1h-1zm1 -671h1v1h-1zm0 565h1v1h-1zm0 106h1v1h-1zm1 -670h1v1h-1zm0 564h1v1h-1zm0 106h1v1h-1zm1 -669h1v1h-1zm0 563h1v1h-1zm0 106h1v1h-1zm1 -668h1v1h-1zm0 562h1v1h-1zm0 106h1v1h-1zm1 -667h1v1h-1zm0 561h1v1h-1zm0 106h1v1h-1zm1 -666h1v1h-1zm0 560h1v1h-1zm0 106h1v1h-1zm1 -665h1v2h-1zm0 559h1v1h-1zm0 106h1v1h-1zm1 -663h1v1h-1zm0 557h1v1h-1zm0 106h1v1h-1zm1 -662h1v1h-1zm0 556h1v1h-1zm0 106h1v1h-1zm1 -661h1v1h-1zm0 555h1v1h-1zm0 106h1v1h-1zm1 -660h1v1h-1zm0 554h1v1h-1zm0 106h1v1h-1zm1 -659h1v1h-1zm0 553h1v1h-1zm0 106h1v1h-1zm1 -658h1v1h-1zm0 552h1v1h-1zm0 106h1v1h-1zm1 -657h1v1h-1zm0 551h1v1h-1zm0 106h1v1h-1zm1 -656h1v1h-1zm0 550h1v1h-1zm0 106h1v1h-1zm1 -655h1v2h-1zm0 549h1v1h-1zm0 106h1v1h-1zm1 -653h1v1h-1zm0 547h1v1h-1zm0 106h1v1h-1zm1 -652h1v1h-1zm0 546h1v1h-1zm0 106h1v1h-1zm1 -651h1v1h-1zm0 545h1v1h-1zm0 106h1v1h-1zm1 -650h1v1h-1zm0 544h1v1h-1zm0 106h1v1h-1zm1 -649h1v1h-1zm0 543h1v1h-1zm0 106h1v1h-1zm1 -648h1v1h-1zm0 542h1v1h-1zm0 106h1v1h-1zm1 -647h1v1h-1zm0 541h1v1h-1zm0 106h1v1h-1zm1 -646h1v1h-1zm0 540h1v1h-1zm0 106h1v1h-1zm1 -645h1v2h-1zm0 539h1v1h-1zm0 106h1v1h-1zm1 -643h1v1h-1zm0 537h1v1h-1zm0 106h1v1h-1zm1 -642h1v1h-1zm0 536h1v1h-1zm0 106h1v1h-1zm1 -641h1v1h-1zm0 535h1v1h-1zm0 106h1v1h-1zm1 -640h1v1h-1zm0 534h1v1h-1zm0 106h1v1h-1zm1 -639h1v1h-1zm0 533h1v1h-1zm0 106h1v1h-1zm1 -638h1v1h-1zm0 532h1v1h-1zm0 106h1v1h-1zm1 -637h1v1h-1zm0 531h1v1h-1zm0 106h1v1h-1zm1 -636h1v1h-1zm0 530h1v1h-1zm0 106h1v1h-1zm1 -635h1v2h-1zm0 529h1v1h-1zm0 106h1v1h-1zm1 -633h1v1h-1zm0 527h1v1h-1zm0 106h1v1h-1zm1 -632h1v1h-1zm0 526h1v1h-1zm0 106h1v1h-1zm1 -631h1v1h-1zm0 525h1v1h-1zm0 106h1v1h-1zm1 -630h1v1h-1zm0 524h1v1h-1zm0 106h1v1h-1zm1 -629h1v1h-1zm0 523h1v1h-1zm0 106h1v1h-1zm1 -628h1v1h-1zm0 522h1v1h-1zm0 106h1v1h-1zm1 -627h1v1h-1zm0 521h1v1h-1zm0 106h1v1h-1zm1 -626h1v1h-1zm0 520h1v1h-1zm0 106h1v1h-1zm1 -625h1v2h-1zm0 519h1v1h-1zm0 106h1v1h-1zm1 -623h1v1h-1zm0 517h1v1h-1zm0 106h1v1h-1zm1 -622h1v1h-1zm0 516h1v1h-1zm0 106h1v1h-1zm1 -621h1v1h-1zm0 515h1v1h-1zm0 106h1v1h-1zm1 -620h1v1h-1zm0 514h1v1h-1zm0 106h1v1h-1zm1 -619h1v1h-1zm0 513h1v1h-1zm0 106h1v1h-1zm1 -618h1v1h-1zm0 512h1v1h-1zm0 106h1v1h-1zm1 -617h1v1h-1zm0 511h1v1h-1zm0 106h1v1h-1zm1 -616h1v1h-1zm0 510h1v1h-1zm0 106h1v1h-1zm1 -615h1v2h-1zm0 509h1v1h-1zm0 106h1v1h-1zm1 -613h1v1h-1zm0 507h1v1h-1zm0 106h1v1h-1zm1 -612h1v1h-1zm0 506h1v1h-1zm0 106h1v1h-1zm1 -611h1v1h-1zm0 505h1v1h-1zm0 106h1v1h-1zm1 -610h1v1h-1zm0 504h1v1h-1zm0 106h1v1h-1zm1 -609h1v1h-1zm0 503h1v1h-1zm0 106h1v1h-1zm1 -608h1v1h-1zm0 502h1v1h-1zm0 106h1v1h-1zm1 -607h1v1h-1zm0 501h1v1h-1zm0 106h1v1h-1zm1 -606h1v1h-1zm0 500h1v1h-1zm0 106h1v1h-1zm1 -605h1v2h-1zm0 499h1v1h-1zm0 106h1v1h-1zm1 -603h1v1h-1zm0 497h1v1h-1zm0 106h1v1h-1zm1 -602h1v1h-1zm0 496h1v1h-1zm0 106h1v1h-1zm1 -601h1v1h-1zm0 495h1v1h-1zm0 106h1v1h-1zm1 -600h1v1h-1zm0 494h1v1h-1zm0 106h1v1h-1zm1 -599h1v1h-1zm0 493h1v1h-1zm0 106h1v1h-1zm1 -598h1v1h-1zm0 492h1v1h-1zm0 106h1v1h-1zm1 -597h1v1h-1zm0 491h1v1h-1zm0 106h1v1h-1zm1 -596h1v1h-1zm0 490h1v1h-1zm0 106h1v1h-1zm1 -595h1v2h-1zm0 489h1v1h-1zm0 106h1v1h-1zm1 -593h1v1h-1zm0 487h1v1h-1zm0 106h1v1h-1zm1 -592h1v1h-1zm0 486h1v1h-1zm0 106h1v1h-1zm1 -591h1v1h-1zm0 485h1v1h-1zm0 106h1v1h-1zm1 -590h1v1h-1zm0 484h1v1h-1zm0 106h1v1h-1zm1 -589h1v1h-1zm0 483h1v1h-1zm0 106h1v1h-1zm1 -588h1v1h-1zm0 482h1v1h-1zm0 106h1v1h-1zm1 -587h1v1h-1zm0 481h1v1h-1zm0 106h1v1h-1zm1 -586h1v1h-1zm0 480h1v1h-1zm0 106h1v1h-1zm1 -585h1v2h-1zm0 479h1v1h-1zm0 106h1v1h-1zm1 -583h1v1h-1zm0 477h1v1h-1zm0 106h1v1h-1zm1 -582h1v1h-1zm0 476h1v1h-1zm0 106h1v1h-1zm1 -581h1v1h-1zm0 475h1v1h-1zm0 106h1v1h-1zm1 -580h1v1h-1zm0 474h1v1h-1zm0 106h1v1h-1zm1 -579h1v1h-1zm0 473h1v1h-1zm0 106h1v1h-1zm1 -578h1v1h-1zm0 472h1v1h-1zm0 106h1v1h-1zm1 -577h1v1h-1zm0 471h1v1h-1zm0 106h1v1h-1zm1 -576h1v1h-1zm0 470h1v1h-1zm0 106h1v1h-1zm1 -575h1v2h-1zm0 469h1v1h-1zm0 106h1v1h-1zm1 -573h1v1h-1zm0 467h1v1h-1zm0 106h1v1h-1zm1 -572h1v1h-1zm0 466h1v1h-1zm0 106h1v1h-1zm1 -571h1v1h-1zm0 465h1v1h-1zm0 106h1v1h-1zm1 -570h1v1h-1zm0 464h1v1h-1zm0 106h1v1h-1zm1 -569h1v1h-1zm0 463h1v1h-1zm0 106h1v1h-1zm1 -568h1v1h-1zm0 462h1v1h-1zm0 106h1v1h-1zm1 -567h1v1h-1zm0 461h1v1h-1zm0 106h1v1h-1zm1 -566h1v1h-1zm0 460h1v1h-1zm0 106h1v1h-1zm1 -565h1v2h-1zm0 459h1v1h-1zm0 106h1v1h-1zm1 -563h1v1h-1zm0 457h1v1h-1zm0 106h1v1h-1zm1 -562h1v1h-1zm0 456h1v1h-1zm0 106h1v1h-1zm1 -561h1v1h-1zm0 455h1v1h-1zm0 106h1v1h-1zm1 -560h1v1h-1zm0 454h1v1h-1zm0 106h1v1h-1zm1 -559h1v1h-1zm0 453h1v1h-1zm0 106h1v1h-1zm1 -558h1v1h-1zm0 452h1v1h-1zm0 106h1v1h-1zm1 -557h1v1h-1zm0 451h1v1h-1zm0 106h1v1h-1zm1 -556h1v1h-1zm0 450h1v1h-1zm0 106h1v1h-1zm1 -555h1v2h-1zm0 449h1v1h-1zm0 106h1v1h-1zm1 -553h1v1h-1zm0 447h1v1h-1zm0 106h1v1h-1zm1 -552h1v1h-1zm0 446h1v1h-1zm0 106h1v1h-1zm1 -551h1v1h-1zm0 445h1v1h-1zm0 106h1v1h-1zm1 -550h1v1h-1zm0 444h1v1h-1zm0 106h1v1h-1zm1 -549h1v1h-1zm0 443h1v1h-1zm0 106h1v1h-1zm1 -548h1v1h-1zm0 442h1v1h-1zm0 106h1v1h-1zm1 -547h1v1h-1zm0 441h1v1h-1zm0 106h1v1h-1zm1 -546h1v1h-1zm0 440h1v1h-1zm0 106h1v1h-1zm1 -545h1v2h-1zm0 439h1v1h-1zm0 106h1v1h-1zm1 -543h1v1h-1zm0 437h1v1h-1zm0 106h1v1h-1zm1 -542h1v1h-1zm0 436h1v1h-1zm0 106h1v1h-1zm1 -541h1v1h-1zm0 435h1v1h-1zm0 106h1v1h-1zm1 -540h1v1h-1zm0 434h1v1h-1zm0 106h1v1h-1zm1 -539h1v1h-1zm0 433h1v1h-1zm0 106h1v1h-1zm1 -538h1v1h-1zm0 432h1v1h-1zm0 106h1v1h-1zm1 -537h1v1h-1zm0 431h1v1h-1zm0 106h1v1h-1zm1 -536h1v1h-1zm0 430h1v1h-1zm0 106h1v1h-1zm1 -535h1v2h-1zm0 429h1v1h-1zm0 106h1v1h-1zm1 -533h1v1h-1zm0 427h1v1h-1zm0 106h1v1h-1zm1 -532h1v1h-1zm0 426h1v1h-1zm0 106h1v1h-1zm1 -531h1v1h-1zm0 425h1v1h-1zm0 106h1v1h-1zm1 -530h1v1h-1zm0 424h1v1h-1zm0 106h1v1h-1zm1 -529h1v1h-1zm0 423h1v1h-1zm0 106h1v1h-1zm1 -528h1v1h-1zm0 422h1v1h-1zm0 106h1v1h-1zm1 -527h1v1h-1zm0 421h1v1h-1zm0 106h1v1h-1zm1 -526h1v1h-1zm0 420h1v1h-1zm0 106h1v1h-1zm1 -525h1v2h-1zm0 419h1v1h-1zm0 106h1v1h-1zm1 -523h1v1h-1zm0 417h1v1h-1zm0 106h1v1h-1zm1 -522h1v1h-1zm0 416h1v1h-1zm0 106h1v1h-1zm1 -521h1v1h-1zm0 415h1v1h-1zm0 106h1v1h-1zm1 -520h1v1h-1zm0 414h1v1h-1zm0 106h1v1h-1zm1 -519h1v1h-1zm0 413h1v1h-1zm0 106h1v1h-1zm1 -518h1v1h-1zm0 412h1v1h-1zm0 106h1v1h-1zm1 -517h1v1h-1zm0 411h1v1h-1zm0 106h1v1h-1zm1 -516h1v1h-1zm0 410h1v1h-1zm0 106h1v1h-1zm1 -515h1v2h-1zm0 409h1v1h-1zm0 106h1v1h-1zm1 -513h1v1h-1zm0 407h1v1h-1zm0 106h1v1h-1zm1 -512h1v1h-1zm0 406h1v1h-1zm0 106h1v1h-1zm1 -511h1v1h-1zm0 405h1v1h-1zm0 106h1v1h-1zm1 -510h1v1h-1zm0 404h1v1h-1zm0 106h1v1h-1zm1 -509h1v1h-1zm0 403h1v1h-1zm0 106h1v1h-1zm1 -508h1v1h-1zm0 402h1v1h-1zm0 106h1v1h-1zm1 -507h1v1h-1zm0 401h1v1h-1zm0 106h1v1h-1zm1 -506h1v1h-1zm0 400h1v1h-1zm0 106h1v1h-1zm1 -505h1v2h-1zm0 399h1v1h-1zm0 106h1v1h-1zm1 -503h1v1h-1zm0 397h1v1h-1zm0 106h1v1h-1zm1 -502h1v1h-1zm0 396h1v1h-1zm0 106h1v1h-1zm1 -501h1v1h-1zm0 395h1v1h-1zm0 106h1v1h-1zm1 -500h1v1h-1zm0 394h1v1h-1zm0 106h1v1h-1zm1 -499h1v1h-1zm0 393h1v1h-1zm0 106h1v1h-1zm1 -498h1v1h-1zm0 392h1v1h-1zm0 106h1v1h-1zm1 -497h1v1h-1zm0 391h1v1h-1zm0 106h1v1h-1zm1 -496h1v1h-1zm0 390h1v1h-1zm0 106h1v1h-1zm1 -495h1v2h-1zm0 389h1v1h-1zm0 106h1v1h-1zm1 -493h1v1h-1zm0 387h1v1h-1zm0 106h1v1h-1zm1 -492h1v1h-1zm0 386h1v1h-1zm0 106h1v1h-1zm1 -491h1v1h-1zm0 207h1v1h-1zm0 178h1v1h-1zm0 106h1v1h-1zm1 -490h1v1h-1zm0 206h1v1h-1zm0 178h1v1h-1zm0 106h1v1h-1zm1 -489h1v1h-1zm0 205h1v1h-1zm0 178h1v1h-1zm0 106h1v1h-1zm1 -488h1v1h-1zm0 204h1v1h-1zm0 178h1v1h-1zm0 106h1v1h-1zm1 -487h1v1h-1zm0 203h1v1h-1zm0 178h1v1h-1zm0 106h1v1h-1zm1 -486h1v1h-1zm0 202h1v1h-1zm0 178h1v1h-1zm0 106h1v1h-1zm1 -485h1v2h-1zm0 201h1v1h-1zm0 178h1v1h-1zm0 106h1v1h-1zm1 -483h1v1h-1zm0 199h1v1h-1zm0 178h1v1h-1zm0 106h1v1h-1zm1 -482h1v1h-1zm0 198h1v2h-1zm0 178h1v1h-1zm0 106h1v1h-1zm1 -481h1v1h-1zm0 198h1v1h-1zm0 177h1v1h-1zm0 106h1v1h-1zm1 -480h1v1h-1zm0 197h1v1h-1zm0 177h1v1h-1zm0 106h1v1h-1zm1 -479h1v1h-1zm0 196h1v1h-1zm0 177h1v1h-1zm0 106h1v1h-1zm1 -478h1v1h-1zm0 195h1v1h-1zm0 177h1v1h-1zm0 106h1v1h-1zm1 -477h1v1h-1zm0 194h1v2h-1zm0 177h1v1h-1zm0 106h1v1h-1zm1 -476h1v1h-1zm0 194h1v1h-1zm0 176h1v1h-1zm0 106h1v1h-1zm1 -475h1v2h-1zm0 193h1v1h-1zm0 176h1v1h-1zm0 106h1v1h-1zm1 -473h1v1h-1zm0 191h1v1h-1zm0 176h1v1h-1zm0 106h1v1h-1zm1 -472h1v1h-1zm0 190h1v1h-1zm0 176h1v1h-1zm0 106h1v1h-1zm1 -471h1v1h-1zm0 189h1v2h-1zm0 176h1v1h-1zm0 106h1v1h-1zm1 -470h1v1h-1zm0 189h1v1h-1zm0 175h1v1h-1zm0 106h1v1h-1zm1 -469h1v1h-1zm0 188h1v1h-1zm0 175h1v1h-1zm0 106h1v1h-1zm1 -468h1v1h-1zm0 187h1v2h-1zm0 175h1v1h-1zm0 106h1v1h-1zm1 -467h1v1h-1zm0 187h1v1h-1zm0 174h1v1h-1zm0 106h1v1h-1zm1 -466h1v1h-1zm0 186h1v1h-1zm0 174h1v1h-1zm0 106h1v1h-1zm1 -465h1v2h-1zm0 185h1v2h-1zm0 174h1v1h-1zm0 106h1v1h-1zm1 -463h1v1h-1zm0 184h1v1h-1zm0 173h1v1h-1zm0 106h1v1h-1zm1 -462h1v1h-1zm0 183h1v1h-1zm0 173h1v1h-1zm0 106h1v1h-1zm1 -461h1v1h-1zm0 182h1v2h-1zm0 173h1v1h-1zm0 106h1v1h-1zm1 -460h1v1h-1zm0 182h1v1h-1zm0 172h1v1h-1zm0 106h1v1h-1zm1 -459h1v1h-1zm0 181h1v1h-1zm0 172h1v1h-1zm0 106h1v1h-1zm1 -458h1v1h-1zm0 180h1v2h-1zm0 172h1v1h-1zm0 106h1v1h-1zm1 -457h1v1h-1zm0 180h1v1h-1zm0 171h1v1h-1zm0 106h1v1h-1zm1 -456h1v1h-1zm0 179h1v2h-1zm0 171h1v1h-1zm0 106h1v1h-1zm1 -455h1v2h-1zm0 179h1v1h-1zm0 170h1v1h-1zm0 106h1v1h-1zm1 -453h1v1h-1zm0 177h1v2h-1zm0 170h1v1h-1zm0 106h1v1h-1zm1 -452h1v1h-1zm0 177h1v1h-1zm0 169h1v1h-1zm0 106h1v1h-1zm1 -451h1v1h-1zm0 176h1v1h-1zm0 169h1v1h-1zm0 106h1v1h-1zm1 -450h1v1h-1zm0 176h1v1h-1zm0 168h1v1h-1zm0 106h1v1h-1zm1 -449h1v1h-1zm0 175h1v1h-1zm0 168h1v1h-1zm0 106h1v1h-1zm1 -448h1v1h-1zm0 175h1v1h-1zm0 167h1v1h-1zm0 106h1v1h-1zm1 -447h1v1h-1zm0 174h1v2h-1zm0 167h1v1h-1zm0 106h1v1h-1zm1 -446h1v1h-1zm0 174h1v1h-1zm0 166h1v1h-1zm0 106h1v1h-1zm1 -445h1v2h-1zm0 173h1v2h-1zm0 166h1v1h-1zm0 106h1v1h-1zm1 -443h1v1h-1zm0 172h1v1h-1zm0 165h1v1h-1zm0 106h1v1h-1zm1 -442h1v1h-1zm0 171h1v2h-1zm0 165h1v1h-1zm0 106h1v1h-1zm1 -441h1v1h-1zm0 171h1v2h-1zm0 164h1v1h-1zm0 106h1v1h-1zm1 -440h1v1h-1zm0 171h1v1h-1zm0 162h1v2h-1zm0 107h1v1h-1zm1 -439h1v1h-1zm0 170h1v2h-1zm0 162h1v1h-1zm0 107h1v1h-1zm1 -438h1v1h-1zm0 170h1v2h-1zm0 160h1v2h-1zm0 108h1v1h-1zm1 -437h1v1h-1zm0 170h1v1h-1zm0 158h1v2h-1zm0 109h1v1h-1zm1 -436h1v1h-1zm0 169h1v2h-1zm0 157h1v2h-1zm0 110h1v1h-1zm1 -435h1v2h-1zm0 169h1v2h-1zm0 156h1v1h-1zm0 110h1v1h-1zm1 -433h1v1h-1zm0 168h1v1h-1zm0 154h1v2h-1zm0 111h1v1h-1zm1 -432h1v1h-1zm0 167h1v2h-1zm0 153h1v2h-1zm0 112h1v1h-1zm1 -431h1v1h-1zm0 167h1v2h-1zm0 151h1v2h-1zm0 113h1v1h-1zm1 -430h1v1h-1zm0 167h1v2h-1zm0 150h1v1h-1zm0 113h1v1h-1zm1 -429h1v1h-1zm0 167h1v2h-1zm0 148h1v2h-1zm0 114h1v1h-1zm1 -428h1v1h-1zm0 167h1v2h-1zm0 146h1v2h-1zm0 115h1v1h-1zm1 -427h1v1h-1zm0 167h1v1h-1zm0 144h1v2h-1zm0 116h1v1h-1zm1 -426h1v1h-1zm0 166h1v2h-1zm0 143h1v2h-1zm0 117h1v1h-1zm1 -425h1v2h-1zm0 166h1v2h-1zm0 141h1v2h-1zm0 118h1v1h-1zm1 -423h1v1h-1zm0 165h1v2h-1zm0 139h1v2h-1zm0 119h1v1h-1zm1 -422h1v1h-1zm0 165h1v2h-1zm0 137h1v2h-1zm0 120h1v1h-1zm1 -421h1v1h-1zm0 165h1v2h-1zm0 135h1v2h-1zm0 121h1v1h-1zm1 -420h1v1h-1zm0 165h1v2h-1zm0 133h1v2h-1zm0 122h1v1h-1zm1 -419h1v1h-1zm0 165h1v2h-1zm0 131h1v2h-1zm0 123h1v1h-1zm1 -418h1v1h-1zm0 165h1v2h-1zm0 129h1v2h-1zm0 124h1v1h-1zm1 -417h1v1h-1zm0 166h1v2h-1zm0 126h1v2h-1zm0 125h1v1h-1zm1 -730h1v1h-1zm0 314h1v1h-1zm0 166h1v2h-1zm0 124h1v2h-1zm0 126h1v1h-1zm1 -729h1v1h-1zm0 314h1v2h-1zm0 166h1v2h-1zm0 121h1v2h-1zm0 128h1v1h-1zm1 -728h1v1h-1zm0 315h1v1h-1zm0 165h1v2h-1zm0 119h1v2h-1zm0 129h1v1h-1zm1 -727h1v1h-1zm0 315h1v1h-1zm0 166h1v2h-1zm0 116h1v2h-1zm0 130h1v1h-1zm1 -726h1v1h-1zm0 315h1v1h-1zm0 166h1v2h-1zm0 113h1v3h-1zm0 132h1v1h-1zm1 -725h1v1h-1zm0 315h1v1h-1zm0 166h1v3h-1zm0 111h1v2h-1zm0 133h1v1h-1zm1 -724h1v1h-1zm0 315h1v1h-1zm0 167h1v2h-1zm0 107h1v3h-1zm0 135h1v1h-1zm1 -723h1v2h-1zm0 315h1v1h-1zm0 167h1v3h-1zm0 105h1v2h-1zm0 136h1v1h-1zm1 -721h1v1h-1zm0 314h1v1h-1zm0 168h1v2h-1zm0 101h1v3h-1zm0 138h1v1h-1zm1 -720h1v1h-1zm0 314h1v1h-1zm0 168h1v3h-1zm0 99h1v2h-1zm0 139h1v1h-1zm1 -719h1v1h-1zm0 314h1v2h-1zm0 169h1v3h-1zm0 95h1v2h-1zm0 141h1v1h-1zm1 -718h1v1h-1zm0 315h1v1h-1zm0 169h1v3h-1zm0 91h1v3h-1zm0 143h1v1h-1zm1 -717h1v1h-1zm0 315h1v1h-1zm0 170h1v3h-1zm0 87h1v3h-1zm0 145h1v1h-1zm1 -716h1v1h-1zm0 315h1v1h-1zm0 171h1v3h-1zm0 83h1v3h-1zm0 147h1v1h-1zm1 -715h1v1h-1zm0 315h1v1h-1zm0 172h1v3h-1zm0 79h1v3h-1zm0 149h1v1h-1zm1 -714h1v1h-1zm0 315h1v1h-1zm0 173h1v3h-1zm0 74h1v3h-1zm0 152h1v1h-1zm1 -713h1v1h-1zm0 315h1v1h-1zm0 174h1v4h-1zm0 70h1v3h-1zm0 154h1v1h-1zm1 -712h1v1h-1zm0 315h1v1h-1zm0 176h1v4h-1zm0 64h1v3h-1zm0 157h1v1h-1zm1 -711h1v1h-1zm0 315h1v1h-1zm0 178h1v4h-1zm0 57h1v5h-1zm0 161h1v1h-1zm1 -710h1v1h-1zm0 315h1v1h-1zm0 180h1v5h-1zm0 51h1v4h-1zm0 164h1v1h-1zm1 -709h1v2h-1zm0 315h1v2h-1zm0 183h1v5h-1zm0 42h1v6h-1zm0 169h1v1h-1zm1 -707h1v1h-1zm0 315h1v1h-1zm0 185h1v7h-1zm0 32h1v7h-1zm0 175h1v1h-1zm1 -706h1v1h-1zm0 315h1v1h-1zm0 190h1v27h-1zm0 201h1v1h-1zm1 -705h1v1h-1zm0 315h1v1h-1zm0 390h1v1h-1zm1 -704h1v1h-1zm0 315h1v1h-1zm0 389h1v1h-1zm1 -703h1v1h-1zm0 315h1v1h-1zm0 388h1v1h-1zm1 -702h1v1h-1zm0 315h1v1h-1zm0 387h1v1h-1zm1 -701h1v1h-1zm0 315h1v1h-1zm0 386h1v1h-1zm1 -700h1v1h-1zm0 315h1v1h-1zm0 385h1v1h-1zm1 -699h1v1h-1zm0 315h1v2h-1zm0 384h1v1h-1zm1 -698h1v1h-1zm0 316h1v1h-1zm0 382h1v1h-1zm1 -697h1v1h-1zm0 316h1v1h-1zm0 381h1v1h-1zm1 -696h1v1h-1zm0 316h1v1h-1zm0 380h1v1h-1zm1 -695h1v2h-1zm0 316h1v1h-1zm0 379h1v1h-1zm1 -693h1v1h-1zm0 315h1v1h-1zm0 378h1v1h-1zm1 -692h1v1h-1zm0 315h1v1h-1zm0 377h1v1h-1zm1 -691h1v1h-1zm0 315h1v1h-1zm0 376h1v1h-1zm1 -690h1v1h-1zm0 315h1v1h-1zm0 375h1v1h-1zm1 -689h1v1h-1zm0 315h1v2h-1zm0 374h1v1h-1zm1 -688h1v1h-1zm0 316h1v1h-1zm0 372h1v1h-1zm1 -687h1v1h-1zm0 316h1v1h-1zm0 371h1v1h-1zm1 -686h1v1h-1zm0 316h1v1h-1zm0 370h1v1h-1zm1 -685h1v1h-1zm0 316h1v1h-1zm0 369h1v1h-1zm1 -684h1v1h-1zm0 316h1v1h-1zm0 368h1v1h-1zm1 -683h1v1h-1zm0 316h1v1h-1zm0 367h1v1h-1zm1 -682h1v1h-1zm0 316h1v1h-1zm0 366h1v1h-1zm1 -681h1v2h-1zm0 316h1v1h-1zm0 365h1v1h-1zm1 -679h1v1h-1zm0 315h1v2h-1zm0 364h1v1h-1zm1 -678h1v1h-1zm0 316h1v1h-1zm0 362h1v1h-1zm1 -677h1v1h-1zm0 316h1v1h-1zm0 361h1v1h-1zm1 -676h1v1h-1zm0 316h1v1h-1zm0 360h1v1h-1zm1 -675h1v1h-1zm0 316h1v1h-1zm0 359h1v1h-1zm1 -674h1v1h-1zm0 316h1v1h-1zm0 358h1v1h-1zm1 -673h1v1h-1zm0 316h1v1h-1zm0 357h1v1h-1zm1 -672h1v1h-1zm0 316h1v1h-1zm0 356h1v1h-1zm1 -671h1v1h-1zm0 316h1v1h-1zm0 355h1v1h-1zm1 -670h1v1h-1zm0 316h1v2h-1zm0 354h1v1h-1zm1 -669h1v1h-1zm0 317h1v1h-1zm0 352h1v1h-1zm1 -668h1v1h-1zm0 317h1v1h-1zm0 351h1v1h-1zm1 -667h1v2h-1zm0 317h1v1h-1zm0 350h1v1h-1zm1 -665h1v1h-1zm0 316h1v1h-1zm0 349h1v1h-1zm1 -664h1v1h-1zm0 316h1v1h-1zm0 348h1v1h-1zm1 -663h1v1h-1zm0 316h1v1h-1zm0 347h1v1h-1zm1 -662h1v1h-1zm0 316h1v1h-1zm0 346h1v1h-1zm1 -661h1v1h-1zm0 316h1v1h-1zm0 345h1v1h-1zm1 -660h1v1h-1zm0 316h1v2h-1zm0 344h1v1h-1zm1 -659h1v1h-1zm0 317h1v1h-1zm0 342h1v1h-1zm1 -658h1v1h-1zm0 317h1v1h-1zm0 341h1v1h-1zm1 -657h1v1h-1zm0 317h1v1h-1zm0 340h1v1h-1zm1 -656h1v1h-1zm0 317h1v1h-1zm0 339h1v1h-1zm1 -655h1v1h-1zm0 317h1v1h-1zm0 338h1v1h-1zm1 -654h1v1h-1zm0 317h1v1h-1zm0 337h1v1h-1zm1 -653h1v2h-1zm0 317h1v1h-1zm0 336h1v1h-1zm1 -651h1v1h-1zm0 316h1v1h-1zm0 335h1v1h-1zm1 -650h1v1h-1zm0 316h1v2h-1zm0 334h1v1h-1zm1 -649h1v1h-1zm0 317h1v1h-1zm0 332h1v1h-1zm1 -648h1v1h-1zm0 317h1v1h-1zm0 331h1v1h-1zm1 -647h1v1h-1zm0 317h1v1h-1zm0 330h1v1h-1zm1 -646h1v1h-1zm0 317h1v1h-1zm0 329h1v1h-1zm1 -645h1v1h-1zm0 317h1v1h-1zm0 328h1v1h-1zm1 -644h1v1h-1zm0 317h1v1h-1zm0 327h1v1h-1zm1 -643h1v1h-1zm0 317h1v1h-1zm0 326h1v1h-1zm1 -642h1v1h-1zm0 317h1v1h-1zm0 325h1v1h-1zm1 -641h1v1h-1zm0 317h1v2h-1zm0 155h1v1h-1zm0 169h1v1h-1zm1 -640h1v1h-1zm0 318h1v1h-1zm0 153h1v1h-1zm0 169h1v1h-1zm1 -639h1v2h-1zm0 318h1v1h-1zm0 152h1v1h-1zm0 169h1v1h-1zm1 -637h1v1h-1zm0 317h1v1h-1zm0 151h1v1h-1zm0 169h1v1h-1zm1 -636h1v1h-1zm0 317h1v1h-1zm0 150h1v1h-1zm0 169h1v1h-1zm1 -635h1v1h-1zm0 317h1v1h-1zm0 149h1v1h-1zm0 169h1v1h-1zm1 -634h1v1h-1zm0 317h1v1h-1zm0 148h1v1h-1zm0 169h1v1h-1zm1 -633h1v1h-1zm0 317h1v1h-1zm0 147h1v1h-1zm0 169h1v1h-1zm1 -632h1v1h-1zm0 317h1v1h-1zm0 146h1v1h-1zm0 169h1v1h-1zm1 -631h1v1h-1zm0 317h1v2h-1zm0 145h1v1h-1zm0 169h1v1h-1zm1 -630h1v1h-1zm0 318h1v1h-1zm0 143h1v1h-1zm0 169h1v1h-1zm1 -629h1v1h-1zm0 318h1v1h-1zm0 142h1v1h-1zm0 169h1v1h-1zm1 -628h1v1h-1zm0 318h1v1h-1zm0 141h1v1h-1zm0 169h1v1h-1zm1 -627h1v1h-1zm0 318h1v1h-1zm0 140h1v1h-1zm0 169h1v1h-1zm1 -626h1v1h-1zm0 318h1v1h-1zm0 139h1v1h-1zm0 169h1v1h-1zm1 -625h1v2h-1zm0 318h1v1h-1zm0 138h1v1h-1zm0 169h1v1h-1zm1 -623h1v1h-1zm0 317h1v1h-1zm0 137h1v1h-1zm0 169h1v1h-1zm1 -622h1v1h-1zm0 317h1v1h-1zm0 136h1v1h-1zm0 169h1v1h-1zm1 -621h1v1h-1zm0 317h1v2h-1zm0 135h1v1h-1zm0 169h1v1h-1zm1 -620h1v1h-1zm0 318h1v1h-1zm0 133h1v1h-1zm0 169h1v1h-1zm1 -619h1v1h-1zm0 318h1v1h-1zm0 132h1v1h-1zm0 169h1v1h-1zm1 -618h1v1h-1zm0 318h1v1h-1zm0 131h1v1h-1zm0 169h1v1h-1zm1 -617h1v1h-1zm0 318h1v1h-1zm0 130h1v1h-1zm0 169h1v1h-1zm1 -616h1v1h-1zm0 318h1v1h-1zm0 129h1v1h-1zm0 169h1v1h-1zm1 -615h1v1h-1zm0 318h1v1h-1zm0 128h1v1h-1zm0 169h1v1h-1zm1 -614h1v1h-1zm0 318h1v1h-1zm0 127h1v1h-1zm0 169h1v1h-1zm1 -613h1v1h-1zm0 318h1v1h-1zm0 126h1v1h-1zm0 169h1v1h-1zm1 -612h1v1h-1zm0 318h1v2h-1zm0 125h1v1h-1zm0 169h1v2h-1zm1 -611h1v2h-1zm0 319h1v1h-1zm0 123h1v1h-1zm0 170h1v1h-1zm1 -610h1v1h-1zm0 318h1v1h-1zm0 119h1v3h-1zm0 4h1v3h-1zm0 169h1v1h-1zm1 -609h1v1h-1zm0 318h1v1h-1zm0 118h1v1h-1zm0 3h1v1h-1zm0 3h1v1h-1zm0 167h1v1h-1zm1 -608h1v1h-1zm0 318h1v1h-1zm0 117h1v1h-1zm0 3h1v1h-1zm0 3h1v1h-1zm0 167h1v1h-1zm1 -607h1v1h-1zm0 318h1v1h-1zm0 88h1v28h-1zm0 29h1v2h-1zm0 3h1v2h-1zm0 3h1v29h-1zm0 166h1v1h-1zm1 -606h1v1h-1zm0 318h1v1h-1zm0 115h1v1h-1zm0 3h1v1h-1zm0 3h1v1h-1zm0 167h1v1h-1zm1 -605h1v1h-1zm0 318h1v1h-1zm0 114h1v1h-1zm0 3h1v1h-1zm0 3h1v1h-1zm0 167h1v1h-1zm1 -604h1v1h-1zm0 318h1v1h-1zm0 113h1v3h-1zm0 4h1v3h-1zm0 169h1v1h-1zm1 -603h1v1h-1zm0 318h1v2h-1zm0 115h1v1h-1zm0 170h1v1h-1zm1 -602h1v1h-1zm0 319h1v1h-1zm0 113h1v1h-1zm0 170h1v1h-1zm1 -601h1v1h-1zm0 319h1v1h-1zm0 112h1v1h-1zm0 170h1v1h-1zm1 -600h1v1h-1zm0 319h1v1h-1zm0 111h1v1h-1zm0 170h1v1h-1zm1 -599h1v1h-1zm0 319h1v1h-1zm0 110h1v1h-1zm0 170h1v1h-1zm1 -598h1v2h-1zm0 319h1v1h-1zm0 109h1v1h-1zm0 170h1v2h-1zm1 -596h1v1h-1zm0 318h1v1h-1zm0 108h1v1h-1zm0 171h1v1h-1zm1 -596h1v1h-1zm0 318h1v1h-1zm0 107h1v1h-1zm0 171h1v1h-1zm1 -595h1v1h-1zm0 318h1v1h-1zm0 106h1v1h-1zm0 171h1v1h-1zm1 -594h1v1h-1zm0 318h1v2h-1zm0 105h1v1h-1zm0 171h1v1h-1zm1 -593h1v1h-1zm0 319h1v1h-1zm0 103h1v1h-1zm0 171h1v1h-1zm1 -592h1v1h-1zm0 319h1v1h-1zm0 102h1v1h-1zm0 171h1v1h-1zm1 -591h1v1h-1zm0 319h1v1h-1zm0 101h1v1h-1zm0 171h1v1h-1zm1 -590h1v1h-1zm0 319h1v1h-1zm0 100h1v1h-1zm0 171h1v1h-1zm1 -589h1v1h-1zm0 319h1v1h-1zm0 99h1v1h-1zm0 171h1v1h-1zm1 -588h1v1h-1zm0 319h1v1h-1zm0 98h1v1h-1zm0 171h1v2h-1zm1 -587h1v1h-1zm0 319h1v1h-1zm0 97h1v1h-1zm0 172h1v1h-1zm1 -587h1v1h-1zm0 319h1v1h-1zm0 96h1v1h-1zm0 172h1v1h-1zm1 -586h1v2h-1zm0 319h1v2h-1zm0 95h1v1h-1zm0 172h1v1h-1zm1 -584h1v1h-1zm0 319h1v1h-1zm0 93h1v1h-1zm0 172h1v1h-1zm1 -583h1v1h-1zm0 319h1v1h-1zm0 92h1v1h-1zm0 172h1v1h-1zm1 -582h1v1h-1zm0 319h1v1h-1zm0 91h1v1h-1zm0 172h1v1h-1zm1 -581h1v1h-1zm0 319h1v1h-1zm0 90h1v1h-1zm0 172h1v1h-1zm1 -580h1v1h-1zm0 319h1v1h-1zm0 89h1v1h-1zm0 172h1v2h-1zm1 -579h1v1h-1zm0 319h1v1h-1zm0 88h1v1h-1zm0 173h1v1h-1zm1 -579h1v1h-1zm0 319h1v1h-1zm0 87h1v1h-1zm0 173h1v1h-1zm1 -578h1v1h-1zm0 319h1v1h-1zm0 86h1v1h-1zm0 173h1v1h-1zm1 -577h1v1h-1zm0 319h1v2h-1zm0 85h1v1h-1zm0 173h1v1h-1zm1 -576h1v1h-1zm0 320h1v1h-1zm0 83h1v1h-1zm0 173h1v1h-1zm1 -575h1v1h-1zm0 320h1v1h-1zm0 255h1v2h-1zm1 -574h1v1h-1zm0 320h1v1h-1zm0 255h1v1h-1zm1 -574h1v2h-1zm0 320h1v1h-1zm0 254h1v1h-1zm1 -572h1v1h-1zm0 319h1v1h-1zm0 253h1v1h-1zm1 -571h1v1h-1zm0 319h1v1h-1zm0 252h1v1h-1zm1 -570h1v1h-1zm0 319h1v1h-1zm0 251h1v1h-1zm1 -569h1v1h-1zm0 319h1v1h-1zm0 250h1v2h-1zm1 -568h1v1h-1zm0 319h1v2h-1zm0 250h1v1h-1zm1 -568h1v1h-1zm0 320h1v1h-1zm0 248h1v1h-1zm1 -567h1v1h-1zm0 320h1v1h-1zm0 247h1v1h-1zm1 -566h1v1h-1zm0 320h1v1h-1zm0 246h1v1h-1zm1 -565h1v1h-1zm0 320h1v1h-1zm0 245h1v1h-1zm1 -564h1v1h-1zm0 320h1v1h-1zm0 245h1v1h-1zm1 -564h1v1h-1zm0 320h1v1h-1zm0 244h1v1h-1zm1 -563h1v1h-1zm0 320h1v1h-1zm0 243h1v1h-1zm1 -562h1v2h-1zm0 320h1v1h-1zm0 242h1v1h-1zm1 -560h1v1h-1zm0 319h1v2h-1zm0 241h1v2h-1zm1 -559h1v1h-1zm0 320h1v1h-1zm0 240h1v1h-1zm1 -559h1v1h-1zm0 320h1v1h-1zm0 239h1v1h-1zm1 -558h1v1h-1zm0 320h1v1h-1zm0 238h1v1h-1zm1 -557h1v1h-1zm0 320h1v1h-1zm0 237h1v1h-1zm1 -556h1v1h-1zm0 320h1v1h-1zm0 236h1v2h-1zm1 -555h1v1h-1zm0 320h1v1h-1zm0 236h1v1h-1zm1 -555h1v1h-1zm0 320h1v1h-1zm0 235h1v1h-1zm1 -554h1v1h-1zm0 320h1v1h-1zm0 234h1v1h-1zm1 -553h1v1h-1zm0 320h1v2h-1zm0 233h1v2h-1zm1 -552h1v1h-1zm0 321h1v1h-1zm0 232h1v1h-1zm1 -552h1v1h-1zm0 321h1v1h-1zm0 231h1v1h-1zm1 -551h1v2h-1zm0 321h1v1h-1zm0 230h1v1h-1zm1 -549h1v1h-1zm0 320h1v1h-1zm0 229h1v2h-1zm1 -548h1v1h-1zm0 320h1v1h-1zm0 229h1v1h-1zm1 -548h1v1h-1zm0 320h1v1h-1zm0 228h1v1h-1zm1 -547h1v1h-1zm0 320h1v1h-1zm0 227h1v1h-1zm1 -546h1v1h-1zm0 320h1v1h-1zm0 226h1v2h-1zm1 -545h1v1h-1zm0 320h1v2h-1zm0 226h1v1h-1zm1 -545h1v1h-1zm0 321h1v1h-1zm0 224h1v1h-1zm1 -544h1v1h-1zm0 321h1v1h-1zm0 223h1v1h-1zm1 -543h1v1h-1zm0 321h1v1h-1zm0 222h1v2h-1zm1 -542h1v1h-1zm0 321h1v1h-1zm0 222h1v1h-1zm1 -542h1v1h-1zm0 321h1v1h-1zm0 221h1v1h-1zm1 -541h1v1h-1zm0 321h1v1h-1zm0 220h1v1h-1zm1 -540h1v2h-1zm0 321h1v1h-1zm0 219h1v2h-1zm1 -538h1v1h-1zm0 320h1v1h-1zm0 219h1v1h-1zm1 -538h1v1h-1zm0 320h1v2h-1zm0 218h1v1h-1zm1 -537h1v1h-1zm0 321h1v1h-1zm0 216h1v2h-1zm1 -536h1v1h-1zm0 321h1v1h-1zm0 216h1v1h-1zm1 -536h1v1h-1zm0 321h1v1h-1zm0 215h1v1h-1zm1 -535h1v1h-1zm0 321h1v1h-1zm0 214h1v2h-1zm1 -534h1v1h-1zm0 321h1v1h-1zm0 214h1v1h-1zm1 -534h1v1h-1zm0 321h1v1h-1zm0 213h1v1h-1zm1 -533h1v1h-1zm0 321h1v1h-1zm0 212h1v1h-1zm1 -532h1v1h-1zm0 321h1v1h-1zm0 211h1v2h-1zm1 -531h1v1h-1zm0 321h1v2h-1zm0 211h1v1h-1zm1 -531h1v1h-1zm0 322h1v1h-1zm0 209h1v1h-1zm1 -530h1v2h-1zm0 322h1v1h-1zm0 208h1v2h-1zm1 -528h1v1h-1zm0 321h1v1h-1zm0 208h1v1h-1zm1 -528h1v1h-1zm0 321h1v1h-1zm0 207h1v1h-1zm1 -527h1v1h-1zm0 321h1v1h-1zm0 206h1v2h-1zm1 -526h1v1h-1zm0 321h1v1h-1zm0 206h1v1h-1zm1 -526h1v1h-1zm0 321h1v1h-1zm0 205h1v1h-1zm1 -525h1v1h-1zm0 321h1v1h-1zm0 204h1v2h-1zm1 -524h1v1h-1zm0 321h1v2h-1zm0 204h1v1h-1zm1 -524h1v1h-1zm0 322h1v1h-1zm0 202h1v2h-1zm1 -523h1v1h-1zm0 322h1v1h-1zm0 202h1v1h-1zm1 -523h1v1h-1zm0 322h1v1h-1zm0 201h1v1h-1zm1 -522h1v1h-1zm0 322h1v1h-1zm0 200h1v2h-1zm1 -521h1v1h-1zm0 322h1v1h-1zm0 200h1v1h-1zm1 -521h1v2h-1zm0 322h1v1h-1zm0 199h1v1h-1zm1 -519h1v1h-1zm0 321h1v1h-1zm0 198h1v2h-1zm1 -518h1v1h-1zm0 321h1v1h-1zm0 198h1v1h-1zm1 -518h1v1h-1zm0 321h1v2h-1zm0 197h1v1h-1zm1 -517h1v1h-1zm0 322h1v1h-1zm0 196h1v1h-1zm1 -517h1v1h-1zm0 322h1v1h-1zm0 195h1v1h-1zm1 -516h1v1h-1zm0 322h1v1h-1zm0 194h1v2h-1zm1 -515h1v1h-1zm0 322h1v1h-1zm0 194h1v1h-1zm1 -515h1v1h-1zm0 322h1v1h-1zm0 193h1v1h-1zm1 -514h1v1h-1zm0 322h1v1h-1zm0 192h1v2h-1zm1 -513h1v1h-1zm0 322h1v1h-1zm0 192h1v1h-1zm1 -513h1v1h-1zm0 322h1v1h-1zm0 191h1v2h-1zm1 -512h1v1h-1zm0 322h1v2h-1zm0 191h1v1h-1zm1 -512h1v2h-1zm0 323h1v1h-1zm0 189h1v2h-1zm1 -510h1v1h-1zm0 322h1v1h-1zm0 189h1v1h-1zm1 -510h1v1h-1zm0 322h1v1h-1zm0 188h1v1h-1zm1 -509h1v1h-1zm0 322h1v1h-1zm0 187h1v2h-1zm1 -508h1v1h-1zm0 322h1v1h-1zm0 187h1v1h-1zm1 -508h1v1h-1zm0 322h1v1h-1zm0 186h1v2h-1zm1 -507h1v1h-1zm0 322h1v1h-1zm0 186h1v1h-1zm1 -507h1v1h-1zm0 322h1v1h-1zm0 185h1v2h-1zm1 -506h1v1h-1zm0 322h1v2h-1zm0 185h1v1h-1zm1 -506h1v1h-1zm0 323h1v1h-1zm0 183h1v1h-1zm1 -505h1v1h-1zm0 323h1v1h-1zm0 183h1v1h-1zm1 -505h1v1h-1zm0 323h1v1h-1zm0 182h1v1h-1zm1 -504h1v1h-1zm0 323h1v1h-1zm0 181h1v2h-1zm1 -503h1v2h-1zm0 323h1v1h-1zm0 181h1v1h-1zm1 -502h1v1h-1zm0 322h1v1h-1zm0 180h1v2h-1zm1 -501h1v1h-1zm0 322h1v1h-1zm0 180h1v1h-1zm1 -501h1v1h-1zm0 322h1v1h-1zm0 179h1v2h-1zm1 -500h1v1h-1zm0 322h1v2h-1zm0 179h1v1h-1zm1 -500h1v1h-1zm0 323h1v1h-1zm0 177h1v2h-1zm1 -499h1v1h-1zm0 323h1v1h-1zm0 177h1v1h-1zm1 -499h1v1h-1zm0 323h1v1h-1zm0 176h1v2h-1zm1 -498h1v1h-1zm0 323h1v1h-1zm0 176h1v1h-1zm1 -498h1v1h-1zm0 323h1v1h-1zm0 175h1v2h-1zm1 -497h1v1h-1zm0 323h1v1h-1zm0 175h1v1h-1zm1 -497h1v1h-1zm0 323h1v1h-1zm0 174h1v2h-1zm1 -496h1v1h-1zm0 323h1v1h-1zm0 174h1v1h-1zm1 -496h1v2h-1zm0 323h1v2h-1zm0 173h1v2h-1zm1 -494h1v1h-1zm0 323h1v1h-1zm0 172h1v1h-1zm1 -494h1v1h-1zm0 323h1v1h-1zm0 171h1v2h-1zm1 -493h1v1h-1zm0 323h1v1h-1zm0 171h1v1h-1zm1 -493h1v1h-1zm0 323h1v1h-1zm0 170h1v2h-1zm1 -492h1v1h-1zm0 323h1v1h-1zm0 170h1v2h-1zm1 -492h1v1h-1zm0 323h1v1h-1zm0 170h1v1h-1zm1 -492h1v1h-1zm0 323h1v1h-1zm0 169h1v2h-1zm1 -491h1v1h-1zm0 323h1v1h-1zm0 169h1v1h-1zm1 -491h1v1h-1zm0 323h1v2h-1zm0 168h1v2h-1zm1 -490h1v1h-1zm0 324h1v1h-1zm0 167h1v1h-1zm1 -490h1v1h-1zm0 324h1v1h-1zm0 166h1v2h-1zm1 -489h1v1h-1zm0 324h1v1h-1zm0 166h1v1h-1zm1 -489h1v2h-1zm0 324h1v1h-1zm0 165h1v2h-1zm1 -487h1v1h-1zm0 323h1v1h-1zm0 165h1v2h-1zm1 -487h1v1h-1zm0 323h1v1h-1zm0 165h1v1h-1zm1 -487h1v1h-1zm0 323h1v1h-1zm0 164h1v2h-1zm1 -486h1v1h-1zm0 323h1v1h-1zm0 164h1v1h-1zm1 -486h1v1h-1zm0 323h1v2h-1zm0 163h1v2h-1zm1 -485h1v1h-1zm0 324h1v1h-1zm0 162h1v2h-1zm1 -485h1v1h-1zm0 324h1v1h-1zm0 162h1v1h-1zm1 -485h1v1h-1zm0 324h1v1h-1zm0 161h1v2h-1zm1 -484h1v1h-1zm0 324h1v1h-1zm0 161h1v1h-1zm1 -484h1v1h-1zm0 324h1v1h-1zm0 160h1v2h-1zm1 -483h1v1h-1zm0 324h1v1h-1zm0 160h1v2h-1zm1 -483h1v1h-1zm0 324h1v1h-1zm0 160h1v1h-1zm1 -483h1v2h-1zm0 324h1v1h-1zm0 159h1v2h-1zm1 -481h1v1h-1zm0 323h1v2h-1zm0 159h1v2h-1zm1 -481h1v1h-1zm0 324h1v1h-1zm0 158h1v1h-1zm1 -481h1v1h-1zm0 324h1v1h-1zm0 157h1v2h-1zm1 -480h1v1h-1zm0 324h1v1h-1zm0 157h1v2h-1zm1 -480h1v1h-1zm0 324h1v1h-1zm0 157h1v1h-1zm1 -480h1v1h-1zm0 324h1v1h-1zm0 156h1v2h-1zm1 -479h1v1h-1zm0 324h1v1h-1zm0 156h1v2h-1zm1 -479h1v1h-1zm0 324h1v1h-1zm0 156h1v1h-1zm1 -479h1v1h-1zm0 324h1v1h-1zm0 155h1v2h-1zm1 -478h1v1h-1zm0 324h1v2h-1zm0 155h1v2h-1zm1 -478h1v1h-1zm0 325h1v1h-1zm0 154h1v1h-1zm1 -478h1v1h-1zm0 325h1v1h-1zm0 153h1v2h-1zm1 -477h1v2h-1zm0 325h1v1h-1zm0 153h1v2h-1zm1 -476h1v1h-1zm0 324h1v1h-1zm0 153h1v1h-1zm1 -476h1v1h-1zm0 324h1v1h-1zm0 152h1v2h-1zm1 -475h1v1h-1zm0 324h1v1h-1zm1 -323h1v1h-1zm0 324h1v1h-1zm1 -323h1v1h-1zm0 324h1v1h-1zm1 -323h1v1h-1zm0 324h1v2h-1zm1 -323h1v1h-1zm0 325h1v1h-1zm1 -324h1v1h-1zm0 325h1v1h-1zm1 -324h1v1h-1zm0 325h1v1h-1zm1 -324h1v1h-1zm0 325h1v1h-1zm1 -324h1v1h-1zm0 325h1v1h-1zm1 -324h1v1h-1zm0 325h1v1h-1zm1 -324h1v2h-1zm0 325h1v1h-1zm1 -323h1v1h-1zm0 324h1v1h-1zm1 -323h1v1h-1zm0 324h1v2h-1zm1 -323h1v1h-1zm0 325h1v1h-1zm1 -324h1v1h-1zm0 325h1v1h-1zm1 -324h1v1h-1zm0 325h1v1h-1zm1 -324h1v1h-1zm0 325h1v1h-1zm1 -324h1v1h-1zm0 325h1v1h-1z" fill="#fff"/>
<g stroke="#fff" stroke-width="1" fill="none">
<!-- UCS -->
<rect x="17.5" y="858.5" width="15" height="15"/>
<path d="M24.5 858 V789"/>
<path d="M17.5 789.5 H31.5 L24.5 771.5 Z"/><path d="M22.5 789 L24.5 773 L26.5 789" stroke="#8A8A8A"/>
<path d="M33 866.5 H101"/>
<path d="M101.5 859.5 V873.5 L119.5 866.5 Z"/><path d="M101 864.5 L118 866.5 L101 868.5" stroke="#8A8A8A"/>
<path d="M19 736 L26.5 746 L34 736 M26.5 746 V757"/>
<path d="M138 857.5 L151.5 876.5 M151 857.5 L137.5 876.5"/>
</g></svg>
<div class="a" style="left:0px;top:893px;width:1227px;height:16px;background:#ECE9D8"></div>
<div class="a" style="left:0px;top:909px;width:1280px;height:2px;background:#FFFFFF"></div>
<div class="a" style="left:0px;top:914px;width:1280px;height:1px;background:#ACA899"></div>
<div class="a" style="left:0px;top:915px;width:1280px;height:1px;background:#000"></div>
<div class="a" style="left:16px;top:925px;width:1257px;height:1px;background:#ACA899"></div>
<div class="a" style="left:16px;top:926px;width:1257px;height:1px;background:#000"></div>
<div class="a" style="left:17px;top:926px;width:1px;height:42px;background:#000"></div>
<div class="a" style="left:18px;top:927px;width:1255px;height:22px;background:#fff"></div>
<div class="a" style="left:18px;top:949px;width:1255px;height:1px;background:#ACA899"></div>
<div class="a" style="left:18px;top:950px;width:1168px;height:18px;background:#fff"></div>
<div class="t" style="left:18px;top:929px;font-size:13.333px;line-height:13.333px;color:#000;font-family:'Liberation Mono',monospace;">[Линия выбора/пеРечеркивание/Проекция/Кромка/уДалить/Отменить]:</div>
<div class="t" style="left:18px;top:954px;font-size:13.333px;line-height:13.333px;color:#000;font-family:'Liberation Mono',monospace;">Команда:</div>
<div class="a" style="left:0px;top:970px;width:1280px;height:1px;background:#fff"></div>
<div class="a" style="left:0px;top:971px;width:1280px;height:2px;background:linear-gradient(180deg,#D4D0C0,#E4E1D2)"></div>
<div class="t" style="left:8px;top:979px;font-size:12px;line-height:12px;color:#000;transform:scaleX(0.8959);transform-origin:0 0;">469.7774, 786.6329, 0.0000</div>
<div class="a" style="left:1px;top:39px;width:653px;height:26px;background:#ECE9D8"></div><div class="a" style="left:1px;top:39px;width:1px;height:25px;background:#F8F6EE"></div><div class="a" style="left:1px;top:39px;width:652px;height:1px;background:#F4F2E6"></div><div class="a" style="left:653px;top:39px;width:1px;height:26px;background:#ACA899"></div><div class="a" style="left:1px;top:64px;width:653px;height:1px;background:#ACA899"></div><div class="a" style="left:3px;top:40px;width:2px;height:24px;background:#FFFFFF"></div><div class="a" style="left:5px;top:40px;width:1px;height:24px;background:#ACA899"></div><div class="a" style="left:7px;top:40px;width:2px;height:24px;background:#FFFFFF"></div><div class="a" style="left:9px;top:40px;width:1px;height:24px;background:#ACA899"></div>
<div class="a" style="left:0px;top:39px;width:1px;height:25px;background:#FFFFFF"></div>
<svg class="a" style="left:16px;top:45px" width="16" height="16" viewBox="0 0 16 16"><path d="M0.5 2.5H12.5L15.5 5.5V14.5H0.5Z" fill="url(#gDoc)" stroke="#3C6FB4"/><path d="M12 2.5V6H15.5" fill="none" stroke="#3C6FB4"/></svg>
<svg class="a" style="left:39px;top:45px" width="16" height="16" viewBox="0 0 16 16"><path d="M0.5 6L12 1L15.5 2L14.5 11L5 15.5L1 13Z" fill="#E6BC3C" stroke="#C09828" stroke-width="0.8"/><path d="M3 6.5L13 2.5L12 4L4 8Z" fill="#FFFFFF"/><path d="M4 8L12 4L11.5 10L5.5 13Z" fill="#F0D060"/><path d="M7.5 7C5.5 8.5 6 11.5 9.5 13" stroke="#1A3A78" stroke-width="2" fill="none"/><path d="M8.5 10.5L14.5 14.5L9 15.8Z" fill="#1A3A78"/></svg>
<svg class="a" style="left:62px;top:45px" width="16" height="16" viewBox="0 0 16 16"><rect x="1.5" y="1.5" width="13" height="13" rx="1" fill="#5A8ADA" stroke="#2A4890"/><rect x="3.5" y="2" width="9" height="6" fill="#F4F6FA"/><path d="M5 4.5H11M5 6.5H11" stroke="#90A4C4"/><rect x="4" y="10" width="8" height="4.5" fill="#D0DCE8"/><rect x="9" y="11" width="2" height="3" fill="#5A7AAA"/></svg>
<svg class="a" style="left:92px;top:45px" width="16" height="16" viewBox="0 0 16 16"><path d="M4 2.5L9.5 1L11.5 6L6 7.5Z" fill="#F6F6FA" stroke="#9098B8"/><path d="M1.5 8.5L10 5.5L14.5 8V11.5L6 14.5L1.5 12Z" fill="#C4C8E0" stroke="#55608E"/><path d="M5 12L13 9.5" stroke="#FFFFFF" stroke-width="1.5"/></svg>
<svg class="a" style="left:114px;top:45px" width="16" height="16" viewBox="0 0 16 16"><path d="M0.5 0.5H11.5L15.5 4.5V15.5H0.5Z" fill="url(#gDoc)" stroke="#4A7AB8"/><circle cx="9" cy="8.5" r="3.8" fill="#CDE2F2" stroke="#606878" stroke-width="1.3"/><path d="M6.3 11.3L2.5 15.5" stroke="#C06A28" stroke-width="2.2"/></svg>
<svg class="a" style="left:137px;top:45px" width="16" height="16" viewBox="0 0 16 16"><defs><radialGradient id="gGlobe" cx="0.35" cy="0.35" r="0.7"><stop offset="0" stop-color="#D8F4FF"/><stop offset="0.5" stop-color="#58B8E8"/><stop offset="1" stop-color="#1A5A90"/></radialGradient></defs><ellipse cx="12" cy="6" rx="4" ry="5" fill="url(#gGlobe)"/><path d="M1.5 11L8 8.5L13 11V13.5L6.5 16L1.5 14Z" fill="#E8ECF8" stroke="#3A4680" stroke-width="1.1"/><path d="M7 13.5L12.5 11.5" stroke="#fff" stroke-width="1.2"/><path d="M3 3L7 1.5L10 4L9.5 9L6 11.5L2.5 8L1 5Z" fill="#E0B010" stroke="#A08000" stroke-width="0.6"/><path d="M4.5 6.5C5 8 7 8 7.5 6.5M5 4.5H5.5M7 4.5H7.5" stroke="#FFFFFF" stroke-width="1"/></svg>
<svg class="a" style="left:160px;top:45px" width="16" height="16" viewBox="0 0 16 16"><path d="M0.5 5L4.5 3.5L9.5 6V15.5L4 14L0.5 12Z" fill="#E0E8F4" stroke="#C8D0DC" stroke-width="0.6"/><path d="M4 15L9.5 15.5L11 13" stroke="#808080" stroke-width="1"/><circle cx="10.5" cy="7" r="5.5" fill="url(#gGlobe2)"/><path d="M8.5 1.5C7.5 5 8 10 9.5 12.5" stroke="#D02828" stroke-width="1.1" fill="none"/><path d="M6 4C9 3.5 13 4 16 6" stroke="#F0A030" stroke-width="0.9" fill="none"/><path d="M5.5 9.5C9 10 13 8 15.5 4.5" stroke="#C8E820" stroke-width="1" fill="none"/><defs><radialGradient id="gGlobe2" cx="0.4" cy="0.35" r="0.7"><stop offset="0" stop-color="#B8ECFF"/><stop offset="0.6" stop-color="#3AA0D8"/><stop offset="1" stop-color="#105A98"/></radialGradient></defs></svg>
<svg class="a" style="left:189px;top:45px" width="16" height="16" viewBox="0 0 16 16"><path d="M0.5 3.5L11 7.5L10.5 8.5Z" fill="#F8F8FC" stroke="#9098B0" stroke-width="0.8"/><path d="M0.5 9.5L11 8L11 9.5Z" fill="#5A6288" stroke="#3A4068" stroke-width="0.8"/><circle cx="13.8" cy="5" r="1.9" fill="none" stroke="#141C48" stroke-width="1.2"/><circle cx="13.3" cy="11.3" r="1.9" fill="none" stroke="#141C48" stroke-width="1.2"/><path d="M11 7.5L12.5 6.2M11 9L12 10" stroke="#141C48" stroke-width="1.1"/></svg>
<svg class="a" style="left:212px;top:45px" width="16" height="16" viewBox="0 0 16 16"><path d="M0.5 0.5H9.5L11.5 2.5V11.5H0.5Z" fill="url(#gDoc)" stroke="#4A7AB8"/><path d="M3.5 3.5H12.5L15.5 6.5V15.5H3.5Z" fill="url(#gDoc)" stroke="#3C6FB4"/></svg>
<svg class="a" style="left:235px;top:45px" width="16" height="16" viewBox="0 0 16 16"><path d="M1 6L5.5 1.5L11 3L15.5 9L11 15L5 13.5L1.5 10Z" fill="#E0BC40" stroke="#B08A20" stroke-width="0.8"/><path d="M3 5L6 1L8 2.5L10.5 3L10 5Z" fill="#FFFFFF" stroke="#707070" stroke-width="0.6"/><path d="M3.5 5.5H9.5L12 8V12.5H3.5Z" fill="url(#gDoc)" stroke="#3C6FB4" stroke-width="1.1"/></svg>
<svg class="a" style="left:258px;top:45px" width="16" height="16" viewBox="0 0 16 16"><path d="M14.5 1.5L8 8" stroke="#C07838" stroke-width="2.5"/><path d="M13 2.5L9 7" stroke="#F0C090" stroke-width="0.8"/><path d="M8.5 7L6 9.5L5.5 11L2 15L5.5 14L8.5 11L10 9Z" fill="#202020"/></svg>
<svg class="a" style="left:281px;top:45px" width="16" height="16" viewBox="0 0 16 16"><rect x="1.5" y="7.5" width="8" height="7" fill="url(#gOr)" stroke="#1A3A78"/><rect x="0" y="13" width="3" height="3" fill="#1060E0"/><path d="M12 0.5L8 7H11L8.5 12L15 5H12L14 0.5Z" fill="#F8E020" stroke="#303010" stroke-width="0.7"/></svg>
<svg class="a" style="left:309px;top:45px" width="16" height="16" viewBox="0 0 16 16"><path d="M14.5 4.5C12 0.5 6 1.5 5 7.5" stroke="#1A3A78" stroke-width="3" fill="none"/><path d="M0.5 6.5L5 14.5L10 7Z" fill="#1A3A78"/></svg>
<svg class="a" style="left:345px;top:45px" width="16" height="16" viewBox="0 0 16 16"><path d="M1.5 4.5C4 0.5 10 1.5 11 7.5" stroke="#B0B4BC" stroke-width="3" fill="none"/><path d="M15.5 6.5L11 14.5L6 7Z" fill="#B0B4BC"/></svg>
<svg class="a" style="left:388px;top:45px" width="16" height="16" viewBox="0 0 16 16"><path d="M1 4.5C0.5 3 2 2 3.5 3L6 4.5C6 3 7.5 2.5 8.5 3.5L12 8L13 12L11 14L8 13.5L3 10C1.5 9 1 8 2.5 7.5L1.5 6Z" fill="#D89A9A" stroke="#A86868" stroke-width="0.7"/><path d="M3 5L8 8M2.5 7.5L7 10" stroke="#B87878" stroke-width="0.6"/><path d="M12 11L15.5 13.5V16H9.5L9 14Z" fill="#2A5A98"/><path d="M10 12.5L12.5 10.5" stroke="#fff" stroke-width="0.8"/><path d="M12 0.5V7.5M8.5 4H15.5" stroke="#1A3A78" stroke-width="1.2"/><path d="M12 0L10.5 1.8H13.5ZM12 8L10.5 6.2H13.5ZM8 4L9.8 2.5V5.5ZM16 4L14.2 2.5V5.5Z" fill="#1A3A78"/></svg>
<svg class="a" style="left:411px;top:45px" width="16" height="16" viewBox="0 0 16 16"><circle cx="5.5" cy="6" r="4.8" fill="#D4E4F0" stroke="#505860" stroke-width="1.3"/><path d="M3.5 4A2.5 2.5 0 0 1 6 3" stroke="#fff" fill="none"/><path d="M9 9.5L13 14" stroke="#C87830" stroke-width="2.4"/><path d="M10.5 3H15.5M13 0.5V5.5M10.5 7.5H15.5" stroke="#1A3A78" stroke-width="1.4"/></svg>
<svg class="a" style="left:434px;top:45px" width="16" height="16" viewBox="0 0 16 16"><circle cx="6" cy="6.5" r="5" fill="#D8E8F4" stroke="#404858" stroke-width="1.4"/><rect x="3.5" y="4" width="5" height="5" fill="none" stroke="#1A3A78" stroke-width="1.2"/><path d="M9.5 10L13 13.5" stroke="#C06A28" stroke-width="2.4"/><path d="M16 12V16H12Z" fill="#000"/></svg>
<svg class="a" style="left:457px;top:45px" width="16" height="16" viewBox="0 0 16 16"><circle cx="6" cy="6.5" r="5" fill="#D8E8F4" stroke="#404858" stroke-width="1.4"/><path d="M9.5 10L14 14.5" stroke="#C06A28" stroke-width="2.4"/><path d="M13 4C12 0.5 8 0.5 6 4" stroke="#1A4A90" stroke-width="2" fill="none"/><path d="M3 2L7.5 8L8 3Z" fill="#1A4A90"/></svg>
<svg class="a" style="left:485px;top:45px" width="16" height="16" viewBox="0 0 16 16"><rect x="0" y="0" width="15" height="4" fill="url(#rainbow)"/><path d="M2 6L12 4L14 8L8 11L3 9Z" fill="#E0A0A0" stroke="#905858"/><path d="M2 12H6M2 14.5H6" stroke="#6078A8" stroke-width="1.3"/><path d="M9 16L11.5 8L14 16M10 13H13" stroke="#303850" stroke-width="1.2" fill="none"/><rect x="12" y="5" width="3" height="5" fill="#5A7AB0"/></svg>
<svg class="a" style="left:509px;top:45px" width="16" height="16" viewBox="0 0 16 16"><rect x="0.5" y="0.5" width="15" height="15" fill="#F0F4F8" stroke="#1A3A78"/><path d="M4.5 1V15" stroke="#1A3A78"/><path d="M2.5 3V13" stroke="#D8C040" stroke-dasharray="1 1.5"/><rect x="7" y="3" width="2.5" height="2.5" fill="#60A0D0"/><rect x="11" y="3" width="2.5" height="2.5" fill="#60A0D0"/><rect x="7" y="7" width="2.5" height="2.5" fill="#60A0D0"/><rect x="11" y="7" width="2.5" height="2.5" fill="#60A0D0"/><rect x="10.5" y="10.5" width="4" height="4" fill="#F0E040" stroke="#1A3A78" stroke-width="0.8"/></svg>
<svg class="a" style="left:532px;top:45px" width="16" height="16" viewBox="0 0 16 16"><path d="M0.5 0.5H9L11 3V15.5H0.5Z" fill="#F0F4F8" stroke="#1A3A78"/><path d="M3.5 1V15" stroke="#1A3A78"/><rect x="5" y="3" width="2.5" height="2.5" fill="#60A0D0"/><rect x="5" y="7" width="2.5" height="2.5" fill="#60A0D0"/><rect x="5" y="11" width="2.5" height="2.5" fill="#60A0D0"/><path d="M9 3C13 3 14 6 13.5 10" stroke="#1A3A78" stroke-width="1.5" fill="none"/><path d="M11 9H16L13.5 12Z" fill="#1A3A78"/><rect x="11.5" y="12" width="4" height="4" fill="#F0E040" stroke="#1A3A78" stroke-width="0.8"/></svg>
<svg class="a" style="left:555px;top:45px" width="16" height="16" viewBox="0 0 16 16"><rect x="0" y="1" width="16" height="15" fill="#4A88C0"/><path d="M0 4L14 10L12 15L0 9Z" fill="#D8DCE0"/><path d="M0 4L14 10" stroke="#F8F8F8" stroke-width="2"/><ellipse cx="13" cy="12.5" rx="2.5" ry="2.5" fill="#C0C4C8" stroke="#808890"/></svg>
<svg class="a" style="left:578px;top:45px" width="16" height="16" viewBox="0 0 16 16"><path d="M4.5 3.5H15.5V15.5H4.5Z" fill="#E8E8E8" stroke="#707070"/><path d="M2.5 2.5H13.5V13.5H2.5Z" fill="#C8D8E8" stroke="#909090"/><path d="M1.5 3C1 1 3 0.5 4.5 1.5C5.5 0 8 0 8.5 1.5C10 0.5 12 1.5 11 3.5C12.5 5 12 7 10.5 7.5C11.5 9.5 9.5 11 8 10C7 12 4 11.5 4 10C2 10.5 1 8.5 2.5 7.5C0.5 6.5 0.5 4 1.5 3Z" fill="#F4F4F4" stroke="#E82020" stroke-width="1.4"/></svg>
<svg class="a" style="left:601px;top:45px" width="16" height="16" viewBox="0 0 16 16"><rect x="1.5" y="0.5" width="12" height="15" fill="#101010" stroke="#000"/><rect x="3" y="2" width="9" height="3" fill="#A0C0A0"/><g fill="#E02020"><rect x="3" y="7" width="2" height="1.5"/><rect x="6.5" y="7" width="2" height="1.5"/><rect x="10" y="7" width="2" height="1.5"/></g><g fill="#fff"><rect x="3" y="10" width="2" height="1.5"/><rect x="6.5" y="10" width="2" height="1.5"/><rect x="10" y="10" width="2" height="1.5"/><rect x="3" y="13" width="2" height="1.5"/><rect x="6.5" y="13" width="2" height="1.5"/><rect x="10" y="13" width="2" height="1.5"/></g></svg>
<svg class="a" style="left:631px;top:45px" width="16" height="16" viewBox="0 0 16 16"><rect x="0.5" y="0.5" width="15" height="15" rx="3" fill="#1E5CAC" stroke="#0C3C7C"/><path d="M5 5.5C5 2.5 11 2.5 11 5.5C11 7.5 8 7.5 8 10" stroke="#fff" stroke-width="2.2" fill="none"/><rect x="6.8" y="11.5" width="2.4" height="2.4" fill="#fff"/></svg>
<div class="a" style="left:84px;top:44px;width:1px;height:19px;background:#C5C2B2"></div>
<div class="a" style="left:182px;top:44px;width:1px;height:19px;background:#C5C2B2"></div>
<div class="a" style="left:303px;top:44px;width:1px;height:19px;background:#C5C2B2"></div>
<div class="a" style="left:381px;top:44px;width:1px;height:19px;background:#C5C2B2"></div>
<div class="a" style="left:479px;top:44px;width:1px;height:19px;background:#C5C2B2"></div>
<div class="a" style="left:623px;top:44px;width:1px;height:19px;background:#C5C2B2"></div>
<svg class="a" style="left:334px;top:50px" width="6" height="4"><path d="M0 0H5L2.5 3Z" fill="#1A3A78"/></svg>
<svg class="a" style="left:371px;top:50px" width="6" height="4"><path d="M0 0H5L2.5 3Z" fill="#B0B4BC"/></svg>
<div class="a" style="left:655px;top:39px;width:398px;height:26px;background:#ECE9D8"></div><div class="a" style="left:655px;top:39px;width:1px;height:25px;background:#F8F6EE"></div><div class="a" style="left:655px;top:39px;width:397px;height:1px;background:#F4F2E6"></div><div class="a" style="left:1052px;top:39px;width:1px;height:26px;background:#ACA899"></div><div class="a" style="left:655px;top:64px;width:398px;height:1px;background:#ACA899"></div><div class="a" style="left:657px;top:40px;width:2px;height:24px;background:#FFFFFF"></div><div class="a" style="left:659px;top:40px;width:1px;height:24px;background:#ACA899"></div><div class="a" style="left:661px;top:40px;width:2px;height:24px;background:#FFFFFF"></div><div class="a" style="left:663px;top:40px;width:1px;height:24px;background:#ACA899"></div>
<svg class="a" style="left:671px;top:45px" width="16" height="16" viewBox="0 0 16 16"><path d="M1 13L6 1L10 12M3 8.5H8.5" stroke="#000" stroke-width="1.6" fill="none"/><path d="M15.5 6L10 12" stroke="#C07838" stroke-width="2.2"/><path d="M10.5 11L8 13L6 16L9.5 14.5L11.5 12Z" fill="#202020"/></svg>
<div class="a" style="left:691px;top:42px;width:100px;height:22px;background:#FFFFFF;border:1px solid #7F9DB9;box-sizing:border-box"></div><div class="a" style="left:774px;top:44px;width:15px;height:18px;background:linear-gradient(135deg,#D6E2FD 0%,#C4D4FA 50%,#AFC8F8 100%);border-radius:2px"></div><svg class="a" style="left:777px;top:50px" width="10" height="7"><path d="M1 1.5L5 5.5L9 1.5" stroke="#4D6185" stroke-width="2.3" fill="none"/></svg>
<div class="t" style="left:697px;top:47px;font-size:12px;line-height:12px;color:#000;transform:scaleX(0.8825);transform-origin:0 0;">GOSTW</div>
<div class="a" style="left:793px;top:44px;width:1px;height:19px;background:#C5C2B2"></div>
<svg class="a" style="left:800px;top:45px" width="16" height="16" viewBox="0 0 16 16"><path d="M0.5 12V16M15.5 12V16M1 14H15" stroke="#000" stroke-width="1.3"/><path d="M1 14L4 12.5V15.5ZM15 14L12 12.5V15.5Z" fill="#000"/><path d="M15.5 1L9 8" stroke="#C07838" stroke-width="2.2"/><path d="M9.5 7L7 9.5L4.5 12.5L8.5 11L10.5 8.5Z" fill="#202020"/></svg>
<div class="a" style="left:820px;top:42px;width:100px;height:22px;background:#FFFFFF;border:1px solid #7F9DB9;box-sizing:border-box"></div><div class="a" style="left:903px;top:44px;width:15px;height:18px;background:linear-gradient(135deg,#D6E2FD 0%,#C4D4FA 50%,#AFC8F8 100%);border-radius:2px"></div><svg class="a" style="left:906px;top:50px" width="10" height="7"><path d="M1 1.5L5 5.5L9 1.5" stroke="#4D6185" stroke-width="2.3" fill="none"/></svg>
<div class="t" style="left:826px;top:47px;font-size:12px;line-height:12px;color:#000;transform:scaleX(0.8418);transform-origin:0 0;">ISO-25</div>
<div class="a" style="left:922px;top:44px;width:1px;height:19px;background:#C5C2B2"></div>
<svg class="a" style="left:929px;top:45px" width="16" height="16" viewBox="0 0 16 16"><rect x="0.5" y="3.5" width="14" height="12" fill="#3A6AB0" stroke="#2A4A80"/><rect x="0.5" y="3.5" width="14" height="3" fill="#4A7ACC"/><g fill="#fff"><rect x="2" y="8" width="3" height="2"/><rect x="6" y="8" width="3" height="2"/><rect x="10" y="8" width="3" height="2"/><rect x="2" y="11.5" width="3" height="2"/><rect x="6" y="11.5" width="3" height="2"/><rect x="10" y="11.5" width="3" height="2"/></g><path d="M15.5 0.5L9 7" stroke="#C07838" stroke-width="2.2"/><path d="M9.5 6L7 8.5L5 11.5L8.5 10L10.5 7.5Z" fill="#202020"/></svg>
<div class="a" style="left:949px;top:42px;width:100px;height:22px;background:#FFFFFF;border:1px solid #7F9DB9;box-sizing:border-box"></div><div class="a" style="left:1032px;top:44px;width:15px;height:18px;background:linear-gradient(135deg,#D6E2FD 0%,#C4D4FA 50%,#AFC8F8 100%);border-radius:2px"></div><svg class="a" style="left:1035px;top:50px" width="10" height="7"><path d="M1 1.5L5 5.5L9 1.5" stroke="#4D6185" stroke-width="2.3" fill="none"/></svg>
<div class="t" style="left:954.5px;top:47px;font-size:12px;line-height:12px;color:#000;transform:scaleX(0.8727);transform-origin:0 0;">Standard</div>
<div class="a" style="left:0px;top:66px;width:1216px;height:1px;background:#FFFFFF"></div>
<div class="a" style="left:1px;top:67px;width:237px;height:26px;background:#ECE9D8"></div><div class="a" style="left:1px;top:67px;width:1px;height:25px;background:#F8F6EE"></div><div class="a" style="left:1px;top:67px;width:236px;height:1px;background:#F4F2E6"></div><div class="a" style="left:237px;top:67px;width:1px;height:26px;background:#ACA899"></div><div class="a" style="left:1px;top:92px;width:237px;height:1px;background:#ACA899"></div><div class="a" style="left:3px;top:68px;width:2px;height:24px;background:#FFFFFF"></div><div class="a" style="left:5px;top:68px;width:1px;height:24px;background:#ACA899"></div><div class="a" style="left:7px;top:68px;width:2px;height:24px;background:#FFFFFF"></div><div class="a" style="left:9px;top:68px;width:1px;height:24px;background:#ACA899"></div>
<div class="a" style="left:0px;top:67px;width:1px;height:25px;background:#FFFFFF"></div>
<div class="a" style="left:13px;top:70px;width:175px;height:22px;background:#FFFFFF;border:1px solid #7F9DB9;box-sizing:border-box"></div><div class="a" style="left:171px;top:72px;width:15px;height:18px;background:linear-gradient(135deg,#D6E2FD 0%,#C4D4FA 50%,#AFC8F8 100%);border-radius:2px"></div><svg class="a" style="left:174px;top:78px" width="10" height="7"><path d="M1 1.5L5 5.5L9 1.5" stroke="#4D6185" stroke-width="2.3" fill="none"/></svg>
<div class="t" style="left:22.5px;top:75px;font-size:12px;line-height:12px;color:#000;transform:scaleX(0.9017);transform-origin:0 0;">Классический AutoCAD</div>
<svg class="a" style="left:191px;top:73px" width="16" height="16" viewBox="0 0 16 16"><rect x="0" y="0" width="16" height="16" fill="#3C70A4"/><g transform="translate(8 8)"><g fill="#F0F4F8"><rect x="-2.3" y="-7.6" width="4.6" height="15.2"/><rect x="-7.6" y="-2.3" width="15.2" height="4.6"/><rect x="-2.3" y="-7.6" width="4.6" height="15.2" transform="rotate(45)"/><rect x="-2.3" y="-7.6" width="4.6" height="15.2" transform="rotate(-45)"/><circle r="6"/></g><g fill="#404040"><rect x="-1.3" y="-6.8" width="2.6" height="13.6"/><rect x="-6.8" y="-1.3" width="13.6" height="2.6"/><rect x="-1.3" y="-6.8" width="2.6" height="13.6" transform="rotate(45)"/><rect x="-1.3" y="-6.8" width="2.6" height="13.6" transform="rotate(-45)"/><circle r="5"/></g><circle r="3.3" fill="#F4F4F4"/><circle r="2.4" fill="#4A7CB0"/></g></svg>
<svg class="a" style="left:214px;top:73px" width="16" height="16" viewBox="0 0 16 16"><rect x="0" y="0" width="16" height="16" fill="#DCE6F0"/><path d="M1 0V16M5 0V3M9 0V3M13 0V5M0 3H16M13 11V16M0 11H3M13 11H16" stroke="#8A929A" stroke-width="0.8" stroke-dasharray="1 1"/><path d="M1.5 9L8 3L15 9H13V15.5H2.5V9Z M2.5 3V8" fill="#FFFFFF" stroke="#FFFFFF" stroke-width="1.5"/><path d="M2.5 8L8 3.2L14 8H12.5V14H3.5V8Z" fill="#2A2C30"/><rect x="3.5" y="3" width="2" height="4" fill="#2A2C30"/></svg>
<div class="a" style="left:240px;top:67px;width:385px;height:26px;background:#ECE9D8"></div><div class="a" style="left:240px;top:67px;width:1px;height:25px;background:#F8F6EE"></div><div class="a" style="left:240px;top:67px;width:384px;height:1px;background:#F4F2E6"></div><div class="a" style="left:624px;top:67px;width:1px;height:26px;background:#ACA899"></div><div class="a" style="left:240px;top:92px;width:385px;height:1px;background:#ACA899"></div><div class="a" style="left:242px;top:68px;width:2px;height:24px;background:#FFFFFF"></div><div class="a" style="left:244px;top:68px;width:1px;height:24px;background:#ACA899"></div><div class="a" style="left:246px;top:68px;width:2px;height:24px;background:#FFFFFF"></div><div class="a" style="left:248px;top:68px;width:1px;height:24px;background:#ACA899"></div>
<svg class="a" style="left:255px;top:73px" width="16" height="16" viewBox="0 0 16 16"><path d="M0.5 12L7 9L15.5 12.5L9 15.5Z" fill="#9EBCDC" stroke="#7090B8" stroke-width="0.8"/><path d="M0.5 8.5L7 5.5L15.5 9L9 12Z" fill="#B4CCE6" stroke="#7090B8" stroke-width="0.8"/><path d="M0.5 5L7 2L15.5 5.5L9 8.5Z" fill="#C8DCF0" stroke="#7090B8" stroke-width="0.8"/></svg>
<div class="a" style="left:275px;top:70px;width:300px;height:22px;background:#FFFFFF;border:1px solid #7F9DB9;box-sizing:border-box"></div><div class="a" style="left:558px;top:72px;width:15px;height:18px;background:linear-gradient(135deg,#D6E2FD 0%,#C4D4FA 50%,#AFC8F8 100%);border-radius:2px"></div><svg class="a" style="left:561px;top:78px" width="10" height="7"><path d="M1 1.5L5 5.5L9 1.5" stroke="#4D6185" stroke-width="2.3" fill="none"/></svg>
<svg class="a" style="left:282px;top:73px" width="16" height="16" viewBox="0 0 16 16"><path d="M4.5 11C4.5 8 1 7 1 4C1 1.5 3 0 5 0C7 0 9 1.5 9 4C9 7 5.5 8 5.5 11Z" transform="translate(0.5 0.5)" fill="#FFFFF0" stroke="#C8B020" stroke-width="1.2"/><rect x="3.5" y="11" width="4" height="3" fill="#8890C0"/><rect x="4" y="13.5" width="3" height="1.5" fill="#404880"/></svg>
<svg class="a" style="left:296px;top:73px" width="16" height="16" viewBox="0 0 16 16"><circle cx="7" cy="7" r="6" fill="url(#gYel)" stroke="#1A6AE0" stroke-width="1.4"/><rect x="0" y="0" width="2" height="2" fill="#F0D020"/><rect x="12" y="0" width="2" height="2" fill="#F0D020"/><rect x="0" y="12" width="2" height="2" fill="#F0D020"/><rect x="12" y="12" width="2" height="2" fill="#F0D020"/></svg>
<svg class="a" style="left:312px;top:73px" width="16" height="16" viewBox="0 0 16 16"><circle cx="5.5" cy="5.5" r="5.5" fill="#A8C8EC"/><circle cx="5.5" cy="5.5" r="2" fill="#E0D090"/><path d="M5.5 1V10M1 5.5H10M2.3 2.3L8.7 8.7M8.7 2.3L2.3 8.7" stroke="#D8C880" stroke-width="0.8"/><path d="M5.5 6.5H14.5V14.5H5.5Z" fill="#fff" stroke="#8098B8"/></svg>
<svg class="a" style="left:330px;top:73px" width="16" height="16" viewBox="0 0 16 16"><path d="M1 7V4C1 1.5 5.5 1 6 4V7" stroke="#C8C020" stroke-width="1.8" fill="none"/><rect x="5" y="6" width="8" height="8" rx="1" fill="#E8E040" stroke="#A8A010"/><path d="M6 8H12M6 10H12M6 12H12" stroke="#C8C020" stroke-width="0.8"/></svg>
<div class="a" style="left:346px;top:76px;width:11px;height:11px;border:1px solid #000;box-sizing:border-box"></div>
<div class="t" style="left:362px;top:75px;font-size:12px;line-height:12px;color:#000;">0</div>
<svg class="a" style="left:578px;top:73px" width="16" height="16" viewBox="0 0 16 16"><path d="M1 4.5L7.5 1.5L15 4.5L8.5 7.5Z" fill="#C8DCF0" stroke="#7090B8" stroke-width="0.8"/><path d="M1 7.5L7.5 4.5L15 7.5L8.5 10.5Z" fill="#B4CCE6" stroke="#7090B8" stroke-width="0.8"/><path d="M1 11L7.5 8L15 11L8.5 14Z" fill="#F0D840" stroke="#B89810" stroke-width="0.8"/><path d="M1.5 15.5L4.5 12.5M2 12.5H4.5V15" stroke="#1A3A78" stroke-width="1.3" fill="none"/></svg>
<svg class="a" style="left:601px;top:73px" width="16" height="16" viewBox="0 0 16 16"><path d="M0.5 6L7.5 3L14.5 6L7.5 9Z" fill="#B8D0E8" stroke="#6A8EB8" stroke-width="0.8"/><path d="M0.5 9L7.5 6L14.5 9L7.5 12Z" fill="#A8C4E4" stroke="#6A8EB8" stroke-width="0.8"/><path d="M0.5 12L7.5 9L14.5 12L7.5 15Z" fill="#98B8DC" stroke="#6A8EB8" stroke-width="0.8"/><path d="M5 6C5 1 12 0 12 5" stroke="#1A3A78" stroke-width="2" fill="none"/><path d="M2.5 4.5L5.5 8.5L8 4Z" fill="#1A3A78"/></svg>
<div class="a" style="left:626px;top:67px;width:590px;height:26px;background:#ECE9D8"></div><div class="a" style="left:626px;top:67px;width:1px;height:25px;background:#F8F6EE"></div><div class="a" style="left:626px;top:67px;width:589px;height:1px;background:#F4F2E6"></div><div class="a" style="left:1215px;top:67px;width:1px;height:26px;background:#ACA899"></div><div class="a" style="left:626px;top:92px;width:590px;height:1px;background:#ACA899"></div><div class="a" style="left:628px;top:68px;width:2px;height:24px;background:#FFFFFF"></div><div class="a" style="left:630px;top:68px;width:1px;height:24px;background:#ACA899"></div><div class="a" style="left:632px;top:68px;width:2px;height:24px;background:#FFFFFF"></div><div class="a" style="left:634px;top:68px;width:1px;height:24px;background:#ACA899"></div>
<div class="a" style="left:639px;top:70px;width:150px;height:22px;background:#FFFFFF;border:1px solid #7F9DB9;box-sizing:border-box"></div><div class="a" style="left:772px;top:72px;width:15px;height:18px;background:linear-gradient(135deg,#D6E2FD 0%,#C4D4FA 50%,#AFC8F8 100%);border-radius:2px"></div><svg class="a" style="left:775px;top:78px" width="10" height="7"><path d="M1 1.5L5 5.5L9 1.5" stroke="#4D6185" stroke-width="2.3" fill="none"/></svg>
<svg class="a" style="left:645px;top:76px" width="10" height="10"><rect x="0.5" y="0.5" width="9" height="9" fill="#000" stroke="#000"/><path d="M1 1.5V9H8.5Z" fill="#fff"/></svg>
<div class="t" style="left:660px;top:75px;font-size:12px;line-height:12px;color:#000;transform:scaleX(0.8772);transform-origin:0 0;">Белый</div>
<div class="a" style="left:791px;top:72px;width:1px;height:19px;background:#C5C2B2"></div>
<div class="a" style="left:795px;top:70px;width:160px;height:22px;background:#FFFFFF;border:1px solid #7F9DB9;box-sizing:border-box"></div><div class="a" style="left:938px;top:72px;width:15px;height:18px;background:linear-gradient(135deg,#D6E2FD 0%,#C4D4FA 50%,#AFC8F8 100%);border-radius:2px"></div><svg class="a" style="left:941px;top:78px" width="10" height="7"><path d="M1 1.5L5 5.5L9 1.5" stroke="#4D6185" stroke-width="2.3" fill="none"/></svg>
<div class="a" style="left:800px;top:81px;width:60px;height:1px;background:#000"></div>
<div class="t" style="left:866px;top:75px;font-size:12px;line-height:12px;color:#000;transform:scaleX(0.8842);transform-origin:0 0;">Послою</div>
<div class="a" style="left:958px;top:72px;width:1px;height:19px;background:#C5C2B2"></div>
<div class="a" style="left:961px;top:70px;width:125px;height:22px;background:#FFFFFF;border:1px solid #7F9DB9;box-sizing:border-box"></div><div class="a" style="left:1069px;top:72px;width:15px;height:18px;background:linear-gradient(135deg,#D6E2FD 0%,#C4D4FA 50%,#AFC8F8 100%);border-radius:2px"></div><svg class="a" style="left:1072px;top:78px" width="10" height="7"><path d="M1 1.5L5 5.5L9 1.5" stroke="#4D6185" stroke-width="2.3" fill="none"/></svg>
<div class="a" style="left:966px;top:79px;width:35px;height:4px;background:#000"></div>
<div class="t" style="left:1007px;top:75px;font-size:12px;line-height:12px;color:#000;transform:scaleX(0.9031);transform-origin:0 0;">0.40 мм</div>
<div class="a" style="left:1088px;top:72px;width:1px;height:19px;background:#C5C2B2"></div>
<div class="a" style="left:1092px;top:70px;width:120px;height:22px;background:#ECE9D8;border:1px solid #C9C7BA;box-sizing:border-box"></div><div class="a" style="left:1195px;top:72px;width:15px;height:18px;background:linear-gradient(135deg,#F8F8F4,#EDEBE2);border-radius:2px"></div><svg class="a" style="left:1198px;top:78px" width="10" height="7"><path d="M1 1.5L5 5.5L9 1.5" stroke="#C9C7BA" stroke-width="2.3" fill="none"/></svg>
<div class="t" style="left:1103px;top:75px;font-size:12px;line-height:12px;color:#ACA899;transform:scaleX(0.8852);transform-origin:0 0;">Поцвету</div>
<div class="a" style="left:1229px;top:94px;width:25px;height:435px;background:#ECE9D8"></div><div class="a" style="left:1229px;top:94px;width:1px;height:434px;background:#F8F6EE"></div><div class="a" style="left:1229px;top:94px;width:24px;height:1px;background:#F4F2E6"></div><div class="a" style="left:1253px;top:94px;width:1px;height:435px;background:#ACA899"></div><div class="a" style="left:1229px;top:528px;width:25px;height:1px;background:#ACA899"></div><div class="a" style="left:1232px;top:96px;width:19px;height:2px;background:#FFFFFF"></div><div class="a" style="left:1232px;top:98px;width:19px;height:1px;background:#ACA899"></div><div class="a" style="left:1232px;top:100px;width:19px;height:2px;background:#FFFFFF"></div><div class="a" style="left:1232px;top:102px;width:19px;height:1px;background:#ACA899"></div>
<svg class="a" style="left:1233px;top:108px" width="16" height="16" viewBox="0 0 16 16"><path d="M2.5 13.5L13.5 2.5" stroke="#000" stroke-width="1.3" fill="none"/><rect x="1.0" y="12.0" width="3" height="3" fill="#1060E0"/><rect x="12.0" y="1.0" width="3" height="3" fill="#1060E0"/></svg>
<svg class="a" style="left:1233px;top:130px" width="16" height="16" viewBox="0 0 16 16"><path d="M1 15L15 1" stroke="#000" stroke-width="1.3"/><path d="M0 16L1 11L5 15ZM16 0L15 5L11 1Z" fill="#000"/><rect x="6.5" y="6.5" width="3" height="3" fill="#1060E0"/></svg>
<svg class="a" style="left:1233px;top:152px" width="16" height="16" viewBox="0 0 16 16"><path d="M1.5 11.5H10.5M10.5 5.5C14 5.5 14 11.5 10.5 11.5" stroke="#000" stroke-width="1.2" fill="none"/><rect x="0.0" y="10.0" width="3" height="3" fill="#1060E0"/><rect x="9.0" y="10.0" width="3" height="3" fill="#1060E0"/><rect x="9.0" y="4.0" width="3" height="3" fill="#1060E0"/></svg>
<svg class="a" style="left:1233px;top:174px" width="16" height="16" viewBox="0 0 16 16"><path d="M8 1.5L14.5 6.5L12 14.5H4L1.5 6.5Z" fill="url(#gBlueBox)" stroke="#000" stroke-width="1.2"/></svg>
<svg class="a" style="left:1233px;top:196px" width="16" height="16" viewBox="0 0 16 16"><path d="M1.5 5.5H14.5V13.5H1.5Z" fill="url(#gBlueBox)" stroke="#000" stroke-width="1.4"/><rect x="0.0" y="12.0" width="3" height="3" fill="#1060E0"/><rect x="13.0" y="4.0" width="3" height="3" fill="#1060E0"/></svg>
<svg class="a" style="left:1233px;top:218px" width="16" height="16" viewBox="0 0 16 16"><path d="M1.5 14C2 8 8 2.5 14.5 2" stroke="#000" stroke-width="1.2" fill="none"/><rect x="0.0" y="12.5" width="3" height="3" fill="#1060E0"/><rect x="13.0" y="0.5" width="3" height="3" fill="#1060E0"/><rect x="4.0" y="4.5" width="3" height="3" fill="#1060E0"/></svg>
<svg class="a" style="left:1233px;top:240px" width="16" height="16" viewBox="0 0 16 16"><circle cx="8" cy="8" r="6.5" fill="url(#gBlueBox)" stroke="#000" stroke-width="1.4"/><path d="M8 8L12 4" stroke="#000" stroke-width="1.2"/><rect x="6.5" y="6.5" width="3" height="3" fill="#1060E0"/></svg>
<svg class="a" style="left:1233px;top:262px" width="16" height="16" viewBox="0 0 16 16"><path d="M3 2C5 0.5 7 1.5 8 3C10 1.5 13 3 12 6C15 7 15 11 13 12C13 15 9 16 8 14C6 15 3 14 4 11C1 10 1 6 3 5.5C2 4 2 3 3 2Z" fill="url(#gBlueBox)" stroke="#000" stroke-width="1.4"/></svg>
<svg class="a" style="left:1233px;top:284px" width="16" height="16" viewBox="0 0 16 16"><path d="M1 15C2 10 4 7 7 10C10 13 13 8 14 2" stroke="#202020" stroke-width="1.2" fill="none"/></svg>
<svg class="a" style="left:1233px;top:306px" width="16" height="16" viewBox="0 0 16 16"><ellipse cx="8" cy="8.5" rx="6.5" ry="4.5" fill="url(#gBlueBox)" stroke="#000" stroke-width="1.4"/><rect x="6.5" y="2.5" width="3" height="3" fill="#1060E0"/><rect x="0.0" y="7.0" width="3" height="3" fill="#1060E0"/><rect x="13.0" y="7.0" width="3" height="3" fill="#1060E0"/></svg>
<svg class="a" style="left:1233px;top:328px" width="16" height="16" viewBox="0 0 16 16"><path d="M3 10C0 8 2 3.5 8 3.5C14 3.5 15 7 13 9.5C12 10.5 10 11 8 11" stroke="#303030" stroke-width="1.3" fill="url(#gBlueBox)"/><rect x="1.0" y="6.5" width="3" height="3" fill="#1060E0"/><rect x="6.5" y="10.0" width="3" height="3" fill="#1060E0"/></svg>
<svg class="a" style="left:1233px;top:350px" width="16" height="16" viewBox="0 0 16 16"><path d="M6.5 1.5H12.5L15 4V14.5H6.5Z" fill="url(#gBlueBox)" stroke="#6A88B0"/><rect x="1.5" y="4.5" width="8" height="6" fill="#E8E080" stroke="#1A3A78"/><circle cx="7.5" cy="11" r="3.5" fill="#E0D070" stroke="#1A3A78"/><path d="M16 12V16H12Z" fill="#000"/><rect x="0.0" y="9.0" width="3" height="3" fill="#1060E0"/></svg>
<svg class="a" style="left:1233px;top:372px" width="16" height="16" viewBox="0 0 16 16"><rect x="2.5" y="2.5" width="8" height="6" fill="#E8E080" stroke="#1A3A78"/><circle cx="9" cy="10" r="4" fill="#E0D070" stroke="#1A3A78"/><rect x="0.5" y="7.0" width="3" height="3" fill="#1060E0"/></svg>
<svg class="a" style="left:1233px;top:394px" width="16" height="16" viewBox="0 0 16 16"><rect x="6.5" y="8.5" width="3" height="3" fill="#1060E0"/></svg>
<svg class="a" style="left:1233px;top:416px" width="16" height="16" viewBox="0 0 16 16"><rect x="3" y="3" width="10" height="10" fill="#fff"/><path d="M3 6L6 3M3 9L9 3M3 12L12 3M5 13L13 5M8 13L13 8M11 13L13 11" stroke="#3A6AA8" stroke-width="1.2"/><path d="M3 0V16M13 0V16M0 3H16M0 13H16" stroke="#2A5A98" stroke-width="1.6"/></svg>
<svg class="a" style="left:1233px;top:438px" width="16" height="16" viewBox="0 0 16 16"><rect x="3" y="3" width="10" height="10" fill="url(#gGrad)"/><path d="M3 0V16M13 0V16M0 3H16M0 13H16" stroke="#101828" stroke-width="1.6"/></svg>
<svg class="a" style="left:1233px;top:460px" width="16" height="16" viewBox="0 0 16 16"><path d="M0.5 2.5H10L15.5 8V14.5H0.5Z" fill="url(#gBlueBox)" stroke="#1A4A88" stroke-width="1.2"/><circle cx="7" cy="9" r="3" fill="none" stroke="#2A5A98" stroke-width="1.2"/></svg>
<svg class="a" style="left:1233px;top:482px" width="16" height="16" viewBox="0 0 16 16"><rect x="1" y="2" width="14" height="12" fill="#4A70B8"/><rect x="1" y="2" width="14" height="2" fill="#6A9AF0"/><g fill="#fff"><rect x="2" y="5" width="3.5" height="2.5"/><rect x="6.5" y="5" width="3.5" height="2.5"/><rect x="11" y="5" width="3" height="2.5"/><rect x="2" y="8.5" width="3.5" height="2.5"/><rect x="6.5" y="8.5" width="3.5" height="2.5"/><rect x="11" y="8.5" width="3" height="2.5"/><rect x="2" y="12" width="3.5" height="1.5"/><rect x="6.5" y="12" width="3.5" height="1.5"/><rect x="11" y="12" width="3" height="1.5"/></g></svg>
<svg class="a" style="left:1233px;top:504px" width="16" height="16" viewBox="0 0 16 16"><path d="M2.5 14L8 1.5L13.5 14M4.5 9.5H11.5" stroke="#000" stroke-width="1.7" fill="none"/></svg>
<div class="a" style="left:1254px;top:94px;width:26px;height:391px;background:#ECE9D8"></div><div class="a" style="left:1254px;top:94px;width:1px;height:390px;background:#F8F6EE"></div><div class="a" style="left:1254px;top:94px;width:25px;height:1px;background:#F4F2E6"></div><div class="a" style="left:1279px;top:94px;width:1px;height:391px;background:#ACA899"></div><div class="a" style="left:1254px;top:484px;width:26px;height:1px;background:#ACA899"></div><div class="a" style="left:1257px;top:96px;width:20px;height:2px;background:#FFFFFF"></div><div class="a" style="left:1257px;top:98px;width:20px;height:1px;background:#ACA899"></div><div class="a" style="left:1257px;top:100px;width:20px;height:2px;background:#FFFFFF"></div><div class="a" style="left:1257px;top:102px;width:20px;height:1px;background:#ACA899"></div>
<svg class="a" style="left:1259px;top:108px" width="16" height="16" viewBox="0 0 16 16"><path d="M0 14H16" stroke="#303030" stroke-width="1.2"/><path d="M3 13L14 2L16 4L6 14Z" fill="#E8C020" stroke="#1A3A78" stroke-width="0.8"/><path d="M3 13L6 10L8 12L6 14Z" fill="#E07070"/><path d="M6 10L9 7L11 9L8 12Z" fill="#F0F0F0"/><path d="M8.5 7.5L10 6L11.5 7.5L10 9Z" fill="#40A0A0"/></svg>
<svg class="a" style="left:1259px;top:130px" width="16" height="16" viewBox="0 0 16 16"><circle cx="4" cy="4" r="3.3" fill="url(#gBlueBox)" stroke="#000" stroke-width="1.2"/><path d="M6 2C9 0 12 1 13 5" stroke="#1A4A90" stroke-width="1.6" fill="none"/><path d="M10.5 5H15.5L13 8Z" fill="#1A4A90"/><circle cx="9.5" cy="11" r="3.5" fill="url(#gBlueBox)" stroke="#000" stroke-width="1.2"/><circle cx="12" cy="12.5" r="3" fill="url(#gBlueBox)" stroke="#000" stroke-width="1.2"/></svg>
<svg class="a" style="left:1259px;top:152px" width="16" height="16" viewBox="0 0 16 16"><path d="M6.5 3L1 13H6.5Z" fill="url(#gBlueBox)" stroke="#000" stroke-width="1.2"/><path d="M9.5 3L15 13H9.5Z" fill="url(#gBlueBox)" stroke="#000" stroke-width="1.2"/><path d="M8 0V16" stroke="#1A60D0" stroke-width="1.2"/></svg>
<svg class="a" style="left:1259px;top:174px" width="16" height="16" viewBox="0 0 16 16"><path d="M16 13.5H4C1 13.5 0.5 9.5 3 8.5C3 5 4.5 2 8 1.5C10.5 1.5 11.5 3 11.5 6.5V7.5H16" stroke="#000" stroke-width="1.2" fill="none"/><path d="M16 11.5H4.5C3.5 11.5 3.5 10.5 4.5 10.5H6.5V5.5C6.5 3.5 9.5 3.5 9.5 5.5V9.5H16" stroke="#1A70E0" stroke-width="1.2" fill="none"/></svg>
<svg class="a" style="left:1259px;top:196px" width="16" height="16" viewBox="0 0 16 16"><g fill="url(#gBlueBox)" stroke="#000" stroke-width="1.2"><rect x="0.5" y="0.5" width="6" height="6"/><rect x="9.5" y="0.5" width="6" height="6"/><rect x="0.5" y="9.5" width="6" height="6"/><rect x="9.5" y="9.5" width="6" height="6"/></g></svg>
<svg class="a" style="left:1259px;top:218px" width="16" height="16" viewBox="0 0 16 16"><path d="M8 1V15M1 8H15" stroke="#3A6AA8" stroke-width="2.2"/><path d="M8 0L4.5 4H11.5ZM8 16L4.5 12H11.5ZM0 8L4 4.5V11.5ZM16 8L12 4.5V11.5Z" fill="#3A6AA8"/></svg>
<svg class="a" style="left:1259px;top:240px" width="16" height="16" viewBox="0 0 16 16"><path d="M5 4C1 6 1.5 14 8 14.5C14 14.5 15 8 12 5" stroke="#3A6AA8" stroke-width="2.2" fill="none"/><path d="M3 1L9 2L4 7Z" fill="#3A6AA8"/></svg>
<svg class="a" style="left:1259px;top:262px" width="16" height="16" viewBox="0 0 16 16"><rect x="1" y="1" width="14.5" height="14.5" fill="url(#gBlueBox)"/><path d="M1 1.5H15.5V15.5H8" stroke="#2A5A98" stroke-width="1.3" fill="none"/><path d="M1.5 7.5H8.5V15M1.5 7.5V15.5H8.5" stroke="#000" stroke-width="1.2" stroke-dasharray="1.2 1.2" fill="none"/></svg>
<svg class="a" style="left:1259px;top:284px" width="16" height="16" viewBox="0 0 16 16"><rect x="1" y="1" width="5" height="14" fill="url(#gBlueBox)"/><path d="M6 1H1V15H6" stroke="#000" stroke-width="1.5" fill="none"/><path d="M5.5 2V14" stroke="#000" stroke-dasharray="1 1"/><path d="M8.5 1.5H10.5L15.5 15H8.5Z" fill="url(#gBlueBox)" stroke="#2A5A98" stroke-width="1.1"/></svg>
<svg class="a" style="left:1259px;top:306px" width="16" height="16" viewBox="0 0 16 16"><path d="M0 11H4" stroke="#000" stroke-width="1.3"/><path d="M7 11H16" stroke="#1A60D0" stroke-width="1.2" stroke-dasharray="2 1.5"/><path d="M4 16L10 4" stroke="#1A60D0" stroke-width="1.3"/></svg>
<svg class="a" style="left:1259px;top:328px" width="16" height="16" viewBox="0 0 16 16"><path d="M0 8H4" stroke="#000" stroke-width="1.3"/><path d="M5 8H11" stroke="#1A60D0" stroke-width="1.2" stroke-dasharray="2 1.5"/><path d="M10 14L15 2" stroke="#1A60D0" stroke-width="1.3"/></svg>
<svg class="a" style="left:1259px;top:350px" width="16" height="16" viewBox="0 0 16 16"><path d="M1.5 4.5H15.5V13.5H1.5Z" fill="url(#gBlueBox)" stroke="#000" stroke-width="1.5"/><rect x="7" y="2" width="3" height="3" fill="#3A6AA8"/></svg>
<svg class="a" style="left:1259px;top:372px" width="16" height="16" viewBox="0 0 16 16"><path d="M1.5 4.5H15.5V13.5H1.5Z" fill="url(#gBlueBox)" stroke="#000" stroke-width="1.5"/><rect x="4" y="2" width="3" height="3" fill="#3A6AA8"/><rect x="11" y="2" width="3" height="3" fill="#3A6AA8"/></svg>
<svg class="a" style="left:1259px;top:394px" width="16" height="16" viewBox="0 0 16 16"><path d="M0 8H16" stroke="#000" stroke-width="1.8"/><path d="M3 4L8 8L3 12ZM13 4L8 8L13 12Z" fill="#3A6AA8"/></svg>
<svg class="a" style="left:1259px;top:416px" width="16" height="16" viewBox="0 0 16 16"><path d="M1.5 16V10L7 3.5H16" stroke="#000" stroke-width="1.3" fill="none"/><path d="M1.5 9V2H8" stroke="#000" stroke-dasharray="1 1" fill="none"/><path d="M2 10L8 3" stroke="#1A60D0" stroke-width="1.3"/></svg>
<svg class="a" style="left:1259px;top:438px" width="16" height="16" viewBox="0 0 16 16"><path d="M1.5 16V10M7 1.5H16" stroke="#000" stroke-width="1.3" fill="none"/><path d="M1.5 9V1.5H7" stroke="#000" stroke-dasharray="1 1" fill="none"/><path d="M1.5 10C1.5 5 4 1.5 7 1.5" stroke="#1A60D0" stroke-width="1.8" fill="none"/></svg>
<svg class="a" style="left:1259px;top:460px" width="16" height="16" viewBox="0 0 16 16"><path d="M2 10L9 4L12 7L5 14Z" fill="#E02020"/><path d="M9 4L14 1" stroke="#303030" stroke-width="1.3"/><path d="M1 6L4 8M6 1V5M1 13L3 12M7 15L8 11" stroke="#F0C020" stroke-width="1.5"/><circle cx="14" cy="2" r="2" fill="#D0E0F0" opacity="0.8"/></svg>
<div class="a" style="left:1254px;top:486px;width:26px;height:105px;background:#ECE9D8"></div><div class="a" style="left:1254px;top:486px;width:1px;height:104px;background:#F8F6EE"></div><div class="a" style="left:1254px;top:486px;width:25px;height:1px;background:#F4F2E6"></div><div class="a" style="left:1279px;top:486px;width:1px;height:105px;background:#ACA899"></div><div class="a" style="left:1254px;top:590px;width:26px;height:1px;background:#ACA899"></div><div class="a" style="left:1257px;top:488px;width:20px;height:2px;background:#FFFFFF"></div><div class="a" style="left:1257px;top:490px;width:20px;height:1px;background:#ACA899"></div><div class="a" style="left:1257px;top:492px;width:20px;height:2px;background:#FFFFFF"></div><div class="a" style="left:1257px;top:494px;width:20px;height:1px;background:#ACA899"></div>
<svg class="a" style="left:1259px;top:500px" width="16" height="16" viewBox="0 0 16 16"><rect x="0.5" y="0.5" width="8" height="6" fill="url(#gBlueBox)" stroke="#3A6AA8"/><rect x="7.5" y="9.5" width="8" height="6" fill="url(#gBlueBox)" stroke="#3A6AA8"/><rect x="3" y="3" width="10" height="10" fill="#5A88C0" stroke="#3A6AA8"/></svg>
<svg class="a" style="left:1259px;top:522px" width="16" height="16" viewBox="0 0 16 16"><rect x="3" y="3" width="10" height="10" fill="#5A88C0" stroke="#3A6AA8"/><rect x="0.5" y="0.5" width="8" height="6" fill="url(#gBlueBox)" stroke="#3A6AA8"/><rect x="7.5" y="9.5" width="8" height="6" fill="url(#gBlueBox)" stroke="#3A6AA8"/></svg>
<svg class="a" style="left:1259px;top:544px" width="16" height="16" viewBox="0 0 16 16"><rect x="5.5" y="5.5" width="10" height="9" fill="url(#gBlueBox)" stroke="#3A6AA8"/><rect x="1.5" y="1.5" width="10" height="9" fill="#5A88C0" stroke="#2A5A98"/></svg>
<svg class="a" style="left:1259px;top:566px" width="16" height="16" viewBox="0 0 16 16"><rect x="1.5" y="1.5" width="10" height="9" fill="#5A88C0" stroke="#2A5A98"/><rect x="5.5" y="5.5" width="10" height="9" fill="url(#gBlueBox)" stroke="#3A6AA8"/></svg>
<div class="a" style="left:2px;top:893px;width:18px;height:15px;background:#ECE9D8;border-left:1px solid #fff;border-top:1px solid #fff;border-right:1px solid #ACA899;border-bottom:1px solid #ACA899;box-sizing:border-box"></div><svg class="a" style="left:2px;top:893px" width="18" height="15"><path d="M6 4H7.5V12H6ZM13 4V12L8 8Z" fill="#000"/></svg>
<div class="a" style="left:20px;top:893px;width:18px;height:15px;background:#ECE9D8;border-left:1px solid #fff;border-top:1px solid #fff;border-right:1px solid #ACA899;border-bottom:1px solid #ACA899;box-sizing:border-box"></div><svg class="a" style="left:20px;top:893px" width="18" height="15"><path d="M11 4V12L6 8Z" fill="#000"/></svg>
<div class="a" style="left:38px;top:893px;width:18px;height:15px;background:#ECE9D8;border-left:1px solid #fff;border-top:1px solid #fff;border-right:1px solid #ACA899;border-bottom:1px solid #ACA899;box-sizing:border-box"></div><svg class="a" style="left:38px;top:893px" width="18" height="15"><path d="M7 4V12L12 8Z" fill="#000"/></svg>
<div class="a" style="left:56px;top:893px;width:18px;height:15px;background:#ECE9D8;border-left:1px solid #fff;border-top:1px solid #fff;border-right:1px solid #ACA899;border-bottom:1px solid #ACA899;box-sizing:border-box"></div><svg class="a" style="left:56px;top:893px" width="18" height="15"><path d="M6 4V12L11 8ZM11.5 4H13V12H11.5Z" fill="#000"/></svg>
<svg class="a" style="left:70px;top:892px" width="130" height="17" shape-rendering="crispEdges"><path d="M7.5 1L12.5 16H57.5L61.5 1Z" fill="#000"/><path d="M7.5 1L12.5 16" stroke="#ACA899" fill="none"/><path d="M61 1.5L57 15.5" stroke="#C8C4B0" fill="none"/><path d="M62.5 1H112.5L108.5 15.5H62Z" fill="#ECE9D8"/><path d="M63 2H111" stroke="#FFFFFF"/><path d="M62.5 1.5L62 15.5H108.5L112.5 1" stroke="#000" fill="none"/></svg>
<div class="t" style="left:86px;top:895px;font-size:11px;line-height:11px;color:#fff;letter-spacing:-0.296px;">Модель</div>
<div class="t" style="left:137px;top:895px;font-size:11px;line-height:11px;color:#000;letter-spacing:-0.524px;">Layout1</div>
<div class="a" style="left:6px;top:924px;width:2px;height:41px;background:#fff"></div>
<div class="a" style="left:8px;top:924px;width:1px;height:41px;background:#ACA899"></div>
<div class="a" style="left:10px;top:924px;width:2px;height:41px;background:#fff"></div>
<div class="a" style="left:12px;top:924px;width:1px;height:41px;background:#ACA899"></div>
<div class="a" style="left:1256px;top:927px;width:16px;height:22px;background:#F4F3EE"></div>
<div class="a" style="left:1257px;top:928px;width:14px;height:9px;background:linear-gradient(135deg,#D6E2FD 0%,#C4D4FA 50%,#AFC8F8 100%);border-radius:2px;box-shadow:inset 0 0 0 1px #B8CCF4"></div>
<div class="a" style="left:1257px;top:939px;width:14px;height:9px;background:linear-gradient(135deg,#D6E2FD 0%,#C4D4FA 50%,#AFC8F8 100%);border-radius:2px;box-shadow:inset 0 0 0 1px #B8CCF4"></div>
<svg class="a" style="left:1257px;top:928px" width="14" height="20"><path d="M5 6.5L7 4.5L9 6.5M5 13.5L7 15.5L9 13.5" stroke="#4D6185" stroke-width="1.8" fill="none"/></svg>
<div class="a" style="left:1186px;top:950px;width:70px;height:19px;background:linear-gradient(180deg,#F3F1EC,#FDFDFB)"></div>
<div class="a" style="left:1190px;top:952px;width:15px;height:15px;background:linear-gradient(135deg,#D6E2FD 0%,#C4D4FA 50%,#AFC8F8 100%);border-radius:2px;box-shadow:inset 0 0 0 1px #B8CCF4"></div>
<div class="a" style="left:1206px;top:952px;width:15px;height:15px;background:linear-gradient(135deg,#D6E2FD 0%,#C4D4FA 50%,#AFC8F8 100%);border-radius:2px;box-shadow:inset 0 0 0 1px #B8CCF4"></div>
<div class="a" style="left:1238px;top:952px;width:15px;height:15px;background:linear-gradient(135deg,#D6E2FD 0%,#C4D4FA 50%,#AFC8F8 100%);border-radius:2px;box-shadow:inset 0 0 0 1px #B8CCF4"></div>
<svg class="a" style="left:1190px;top:952px" width="64" height="15"><path d="M9.5 3.5L5.5 7.5L9.5 11.5M50 3.5L54 7.5L50 11.5" stroke="#4D6185" stroke-width="2" fill="none"/><path d="M20.5 4V11M22.5 4V11M24.5 4V11M26.5 4V11" stroke="#EEF3FE" stroke-width="1"/></svg>
<div class="a" style="left:5px;top:975px;width:189px;height:18px;border-top:1px solid #ACA899;border-left:1px solid #ACA899;border-bottom:1px solid #fff;border-right:1px solid #fff;box-sizing:border-box"></div>
<div class="a" style="left:199px;top:975px;width:25px;height:18px;border-top:1px solid #fff;border-left:1px solid #fff;border-bottom:1px solid #ACA899;border-right:1px solid #ACA899;background:#ECE9D8;box-sizing:border-box"></div>
<div class="t" style="left:201px;top:979px;font-size:12px;line-height:12px;color:#000;transform:scaleX(0.8235);transform-origin:0 0;">ШАГ</div>
<div class="a" style="left:228px;top:975px;width:38px;height:18px;border-top:1px solid #fff;border-left:1px solid #fff;border-bottom:1px solid #ACA899;border-right:1px solid #ACA899;background:#ECE9D8;box-sizing:border-box"></div>
<div class="t" style="left:230px;top:979px;font-size:12px;line-height:12px;color:#000;transform:scaleX(0.8719);transform-origin:0 0;">СЕТКА</div>
<div class="a" style="left:271px;top:975px;width:33px;height:18px;border-top:1px solid #000;border-left:1px solid #000;border-bottom:1px solid #fff;border-right:1px solid #fff;background:#ECE9D8;box-sizing:border-box"></div>
<div class="t" style="left:274px;top:980px;font-size:12px;line-height:12px;color:#000;transform:scaleX(0.8808);transform-origin:0 0;">ОРТО</div>
<div class="a" style="left:310px;top:975px;width:67px;height:18px;border-top:1px solid #fff;border-left:1px solid #fff;border-bottom:1px solid #ACA899;border-right:1px solid #ACA899;background:#ECE9D8;box-sizing:border-box"></div>
<div class="t" style="left:312px;top:979px;font-size:12px;line-height:12px;color:#000;transform:scaleX(0.8787);transform-origin:0 0;">ОТС-ПОЛЯР</div>
<div class="a" style="left:381px;top:975px;width:63px;height:18px;border-top:1px solid #000;border-left:1px solid #000;border-bottom:1px solid #fff;border-right:1px solid #fff;background:#ECE9D8;box-sizing:border-box"></div>
<div class="t" style="left:384px;top:980px;font-size:12px;line-height:12px;color:#000;transform:scaleX(0.9252);transform-origin:0 0;">ПРИВЯЗКА</div>
<div class="a" style="left:448px;top:975px;width:73px;height:18px;border-top:1px solid #000;border-left:1px solid #000;border-bottom:1px solid #fff;border-right:1px solid #fff;background:#ECE9D8;box-sizing:border-box"></div>
<div class="t" style="left:451px;top:980px;font-size:12px;line-height:12px;color:#000;transform:scaleX(0.8851);transform-origin:0 0;">ОТС-ОБЪЕКТ</div>
<div class="a" style="left:525px;top:975px;width:36px;height:18px;border-top:1px solid #000;border-left:1px solid #000;border-bottom:1px solid #fff;border-right:1px solid #fff;background:#ECE9D8;box-sizing:border-box"></div>
<div class="t" style="left:528px;top:980px;font-size:12px;line-height:12px;color:#000;transform:scaleX(0.9874);transform-origin:0 0;">ДПСК</div>
<div class="a" style="left:564px;top:975px;width:30px;height:18px;border-top:1px solid #000;border-left:1px solid #000;border-bottom:1px solid #fff;border-right:1px solid #fff;background:#ECE9D8;box-sizing:border-box"></div>
<div class="t" style="left:567px;top:980px;font-size:12px;line-height:12px;color:#000;transform:scaleX(1.0229);transform-origin:0 0;">ДИН</div>
<div class="a" style="left:598px;top:975px;width:25px;height:18px;border-top:1px solid #fff;border-left:1px solid #fff;border-bottom:1px solid #ACA899;border-right:1px solid #ACA899;background:#ECE9D8;box-sizing:border-box"></div>
<div class="t" style="left:600px;top:979px;font-size:12px;line-height:12px;color:#000;transform:scaleX(0.8511);transform-origin:0 0;">ВЕС</div>
<div class="a" style="left:626px;top:975px;width:52px;height:18px;border-top:1px solid #000;border-left:1px solid #000;border-bottom:1px solid #fff;border-right:1px solid #fff;background:#ECE9D8;box-sizing:border-box"></div>
<div class="t" style="left:629px;top:980px;font-size:12px;line-height:12px;color:#000;transform:scaleX(0.9422);transform-origin:0 0;">МОДЕЛЬ</div>
<div class="a" style="left:1174px;top:975px;width:64px;height:18px;background:#F1EFE6;border-top:1px solid #ACA899;border-left:1px solid #ACA899;border-right:1px solid #fff;border-bottom:1px solid #fff;box-sizing:border-box"></div>
<svg class="a" style="left:1177px;top:976px" width="16" height="16" viewBox="0 0 16 16"><path d="M3 2C1 5 2 10 6 11" stroke="#6A8ABF" stroke-width="2" fill="none"/><circle cx="6" cy="5" r="3" fill="#A0B8E0"/><path d="M9 6L15.5 15.5H4.5Z" fill="#F8E030" stroke="#A08000"/><rect x="9.5" y="9" width="1.5" height="3.5" fill="#000"/><rect x="9.5" y="13.2" width="1.5" height="1.3" fill="#000"/></svg>
<svg class="a" style="left:1197px;top:976px" width="16" height="16" viewBox="0 0 16 16"><path d="M10 7V4C10 0.5 15 0.5 15 4V6" stroke="#C8A000" stroke-width="1.8" fill="none"/><rect x="1" y="6" width="11" height="9" rx="3" fill="#E8C820" stroke="#806000"/><path d="M2 9H11M2 12H11" stroke="#A08000"/><rect x="5" y="7" width="2" height="7" fill="#FFF8C0"/></svg>
<svg class="a" style="left:1218px;top:976px" width="16" height="16" viewBox="0 0 16 16"><path d="M0.5 0.5H10L13 3.5V15.5H0.5Z" fill="#5A80B0" stroke="#2A4A78"/><path d="M5 2V10M1.5 6H8.5" stroke="#fff"/><circle cx="5" cy="6" r="1.5" fill="none" stroke="#fff"/><circle cx="11" cy="12" r="4.5" fill="#20B030"/><path d="M8.5 12L10.5 14L13.5 10" stroke="#fff" stroke-width="1.6" fill="none"/></svg>
<svg class="a" style="left:1243px;top:986px" width="9" height="5"><path d="M0 0H9L4.5 5Z" fill="#000"/></svg>
<div class="a" style="left:1260px;top:975px;width:16px;height:16px;border:2px solid #1A3A78;box-sizing:border-box;background:linear-gradient(135deg,#E8F0F8,#90B0D0);box-shadow:inset 0 0 0 1px #fff"></div>
<div class="a" style="left:0px;top:994px;width:1280px;height:4px;background:linear-gradient(180deg,#2458D0 0,#2458D0 1px,#3A80E4 1px,#3C84E6 100%)"></div>
<div class="a" style="left:0px;top:994px;width:92px;height:4px;background:linear-gradient(180deg,#3A8A40 0,#3A8A40 1px,#58B060 1px,#60B868 100%);border-top-right-radius:3px"></div>
<div class="a" style="left:198px;top:995px;width:157px;height:3px;background:#4A90EC"></div>
<div class="a" style="left:1187px;top:994px;width:93px;height:4px;background:linear-gradient(180deg,#1890E0 0,#1890E0 1px,#10A8F4 1px,#14B0F8 100%);border-left:1px solid #1850B0"></div>
<svg width="0" height="0" style="position:absolute"><defs>
<linearGradient id="gDoc" x1="0" y1="0" x2="1" y2="1"><stop offset="0" stop-color="#FFFFFF"/><stop offset="1" stop-color="#9EC2CE"/></linearGradient>
<linearGradient id="gBlueBox" x1="0" y1="0" x2="1" y2="1"><stop offset="0" stop-color="#F4F8FC"/><stop offset="1" stop-color="#A8BCD8"/></linearGradient>
<linearGradient id="gYel" x1="0" y1="0" x2="1" y2="1"><stop offset="0" stop-color="#FFF080"/><stop offset="1" stop-color="#E8C000"/></linearGradient>
<linearGradient id="gBtn" x1="0" y1="0" x2="1" y2="1"><stop offset="0" stop-color="#D2DEFC"/><stop offset="1" stop-color="#AEC6F8"/></linearGradient>
<linearGradient id="gOr" x1="0" y1="0" x2="1" y2="1"><stop offset="0" stop-color="#FFD0B0"/><stop offset="1" stop-color="#F06020"/></linearGradient>
<linearGradient id="gGrad" x1="0" y1="0" x2="1" y2="1"><stop offset="0" stop-color="#2A3A70"/><stop offset="1" stop-color="#C8C060"/></linearGradient>
<linearGradient id="rainbow" x1="0" y1="0" x2="1" y2="0"><stop offset="0" stop-color="#F02020"/><stop offset="0.2" stop-color="#F0F020"/><stop offset="0.4" stop-color="#20F020"/><stop offset="0.6" stop-color="#20F0F0"/><stop offset="0.8" stop-color="#2020F0"/><stop offset="1" stop-color="#F020F0"/></linearGradient>
</defs></svg>
</body></html>
